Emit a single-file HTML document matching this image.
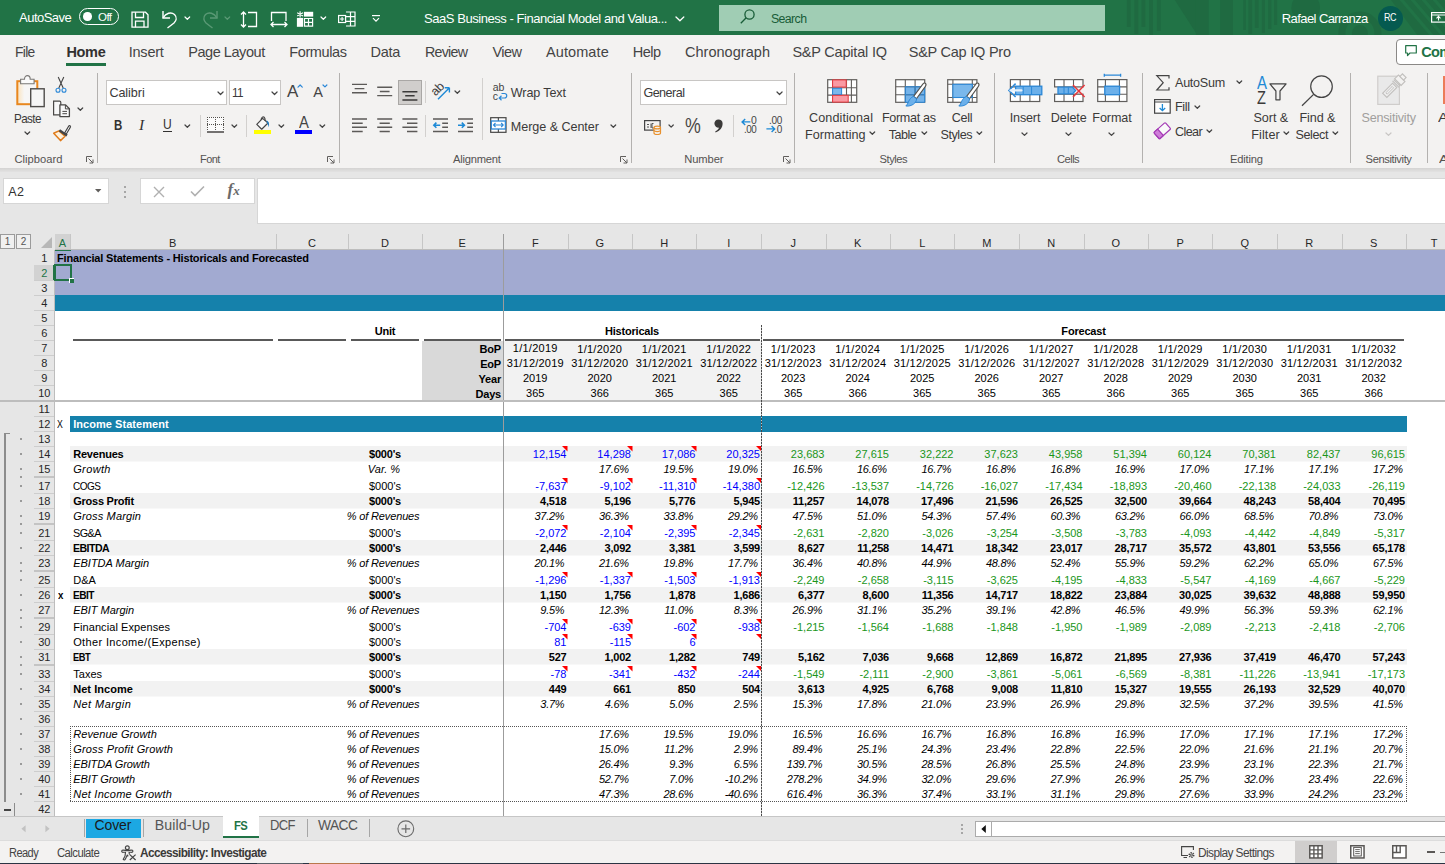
<!DOCTYPE html><html><head><meta charset="utf-8"><title>SaaS Business - Financial Model and Valuation</title><style>
*{box-sizing:border-box;margin:0;padding:0}
html,body{width:1445px;height:864px;overflow:hidden;background:#fff}
body{font-family:"Liberation Sans",sans-serif;position:relative;color:#252423}
.a{position:absolute}
.t{position:absolute;white-space:nowrap;line-height:1}
.c{position:absolute;white-space:nowrap;font-size:11px;line-height:15px;height:15px;color:#000}
.r{text-align:right}
.m{text-align:center}
.b{font-weight:bold}
.i{font-style:italic}
.bl{color:#0000ff}
.gr{color:#1a961a}
svg{position:absolute;overflow:visible}
</style></head><body>
<div class="a " style="left:0px;top:0px;width:1445px;height:35px;background:#217346;"></div>
<div class="a " style="left:0px;top:35px;width:1445px;height:1px;background:#7fac93;"></div>
<div class="a" style="left:1105px;top:0;width:340px;height:35px;overflow:hidden"><svg style="left:0;top:0" width="340" height="35" viewBox="0 0 340 35"><rect x="21.8" y="0" width="3.8" height="27" fill="#1f6a41"/><rect x="29.4" y="0" width="3.9" height="34" fill="#1f6a41"/><rect x="36.5" y="0" width="3.8" height="27" fill="#1f6a41"/><rect x="44.2" y="0" width="3.8" height="36" fill="#1f6a41"/><rect x="51.9" y="0" width="3.8" height="31" fill="#1f6a41"/><path d="M69.8 0H91.0V33Z" fill="#1f6a41"/><rect x="90.9" y="0" width="12.8" height="36" fill="#1f6a41"/><rect x="115.2" y="0" width="12.8" height="36" fill="#1f6a41"/><rect x="138.3" y="0" width="2.5" height="30" fill="#1f6a41"/><rect x="143.4" y="0" width="3.8" height="34" fill="#1f6a41"/><rect x="149.8" y="0" width="3.8" height="28" fill="#1f6a41"/><rect x="156.8" y="0" width="3.2" height="33" fill="#1f6a41"/><rect x="163.2" y="0" width="3.2" height="29" fill="#1f6a41"/><rect x="169.0" y="0" width="3.2" height="25" fill="#1f6a41"/><circle cx="200.7" cy="7.4" r="14.3" fill="#1f6a41"/><circle cx="254.9" cy="33.1" r="18" fill="none" stroke="#1f6a41" stroke-width="7"/><circle cx="254.9" cy="33.1" r="8" fill="#1f6a41"/><path d="M286 0H340V36H313Z" fill="#1f6a41"/><path d="M295 -2L329 38" stroke="#217346" stroke-width="3.2"/><path d="M306 -2L340 38" stroke="#217346" stroke-width="3.2"/><path d="M317 -2L351 38" stroke="#217346" stroke-width="3.2"/><path d="M328 -2L362 38" stroke="#217346" stroke-width="3.2"/><path d="M339 -2L373 38" stroke="#217346" stroke-width="3.2"/><path d="M350 -2L384 38" stroke="#217346" stroke-width="3.2"/></svg></div>
<div class="t" style="left:19.00px;top:11px;font-size:13px;color:#fff;letter-spacing:-0.511px;">AutoSave</div>
<div class="a" style="left:79px;top:8px;width:39.5px;height:17px;border:1px solid #fff;border-radius:9px"></div>
<div class="a" style="left:83px;top:12.4px;width:8.5px;height:8.5px;border-radius:50%;background:#fff"></div>
<div class="t" style="left:98.00px;top:12px;font-size:11.5px;color:#fff;letter-spacing:-0.563px;">Off</div>
<svg style="left:131px;top:10.6px;" width="18" height="17" viewBox="0 0 18 17"><path d="M1 1.2H14.5L17 3.8V16.2H1Z" fill="none" stroke="#fff" stroke-width="1.3"/><path d="M4.5 1.2V6.5H12.5V1.2M4.5 16.2V10.2H13V16.2" fill="none" stroke="#fff" stroke-width="1.3"/></svg>
<svg style="left:161px;top:10px;" width="18" height="19" viewBox="0 0 18 19"><path d="M2 1V8H9" fill="none" stroke="#fff" stroke-width="1.4"/><path d="M2 8C5 3 10 1.5 13.5 4.5C16.5 7.5 15 11 13 13L6.5 18" fill="none" stroke="#fff" stroke-width="1.4"/></svg>
<svg style="left:184.85999999999999px;top:17.075px;" width="4.68" height="2.25" viewBox="0 0 4.68 2.25"><path d="M0 0L2.34 2.25L4.68 0" fill="none" stroke="#fff" stroke-width="1.2" stroke-linecap="round" stroke-linejoin="round"/></svg>
<svg style="left:201px;top:10px;" width="18" height="19" viewBox="0 0 18 19"><path d="M16 1V8H9" fill="none" stroke="#5a9975" stroke-width="1.4"/><path d="M16 8C13 3 8 1.5 4.5 4.5C1.5 7.5 3 11 5 13L11.5 18" fill="none" stroke="#5a9975" stroke-width="1.4"/></svg>
<svg style="left:225.16px;top:17.075px;" width="4.68" height="2.25" viewBox="0 0 4.68 2.25"><path d="M0 0L2.34 2.25L4.68 0" fill="none" stroke="#5a9975" stroke-width="1.2" stroke-linecap="round" stroke-linejoin="round"/></svg>
<svg style="left:240px;top:11px;" width="18" height="17" viewBox="0 0 18 17"><path d="M3.5 1V16M1 3.5L3.5 1L6 3.5M1 13.5L3.5 16L6 13.5" fill="none" stroke="#fff" stroke-width="1.3"/><path d="M8 1.5H16.5V15.5H8" fill="none" stroke="#fff" stroke-width="1.3"/></svg>
<svg style="left:270px;top:11px;" width="18" height="17" viewBox="0 0 18 17"><path d="M1.5 10V1.5H16V10" fill="none" stroke="#fff" stroke-width="1.3"/><path d="M1 13.5H17M3.5 11L1 13.5L3.5 16M14.5 11L17 13.5L14.5 16" fill="none" stroke="#fff" stroke-width="1.3"/></svg>
<svg style="left:296px;top:11px;" width="18" height="16" viewBox="0 0 18 16"><rect x="7.9" y="0.8" width="9.3" height="4.8" fill="#fff"/><rect x="0.9" y="6.9" width="6.2" height="8.9" fill="#fff"/><path d="M8.5 7.5H16.6V15.2H8.5ZM8.5 11.3H16.6M12.5 7.5V15.2" fill="none" stroke="#fff" stroke-width="1.2"/><path d="M4.1 0.3V6.5M1.2 1.8L7 5M7 1.8L1.2 5" stroke="#fff" stroke-width="1.1"/></svg>
<svg style="left:321.46000000000004px;top:17.075px;" width="4.68" height="2.25" viewBox="0 0 4.68 2.25"><path d="M0 0L2.34 2.25L4.68 0" fill="none" stroke="#fff" stroke-width="1.2" stroke-linecap="round" stroke-linejoin="round"/></svg>
<svg style="left:338px;top:11px;" width="18" height="16" viewBox="0 0 18 16"><path d="M8 1H17V15H8M8 5.7H17M8 10.3H17M12.5 1V15" fill="none" stroke="#fff" stroke-width="1.2"/><rect x="0.6" y="4.5" width="7" height="7" fill="#217346" stroke="#fff" stroke-width="1.2"/><path d="M2 8H6.2M4.1 6V10" stroke="#fff" stroke-width="1.1"/></svg>
<svg style="left:372px;top:14.5px;" width="8" height="7" viewBox="0 0 8 7"><path d="M0 0.6H8" stroke="#fff" stroke-width="1.2"/><path d="M1 3.2L4 6.2L7 3.2" fill="none" stroke="#fff" stroke-width="1.2"/></svg>
<div class="t" style="left:424.00px;top:12px;font-size:13px;color:#fff;letter-spacing:-0.451px;">SaaS Business - Financial Model and Valua...</div>
<svg style="left:675.6px;top:17.125px;" width="7.800000000000001" height="3.75" viewBox="0 0 7.800000000000001 3.75"><path d="M0 0L3.9000000000000004 3.75L7.800000000000001 0" fill="none" stroke="#fff" stroke-width="1.3" stroke-linecap="round" stroke-linejoin="round"/></svg>
<div class="a " style="left:719px;top:5px;width:386px;height:26px;background:#a0cdb4;"></div>
<svg style="left:740px;top:9px;" width="15" height="15" viewBox="0 0 15 15"><circle cx="9.5" cy="5.5" r="4.6" fill="none" stroke="#185c37" stroke-width="1.3"/><path d="M6.2 8.8L0.8 14.2" stroke="#185c37" stroke-width="1.3"/></svg>
<div class="t" style="left:770.60px;top:13px;font-size:12.5px;color:#185c37;letter-spacing:-0.625px;transform:scaleX(0.9868);transform-origin:0 0;">Search</div>
<div class="t" style="left:1281.80px;top:12px;font-size:13px;color:#fff;letter-spacing:-0.583px;">Rafael Carranza</div>
<div class="a" style="left:1377.5px;top:5.5px;width:25px;height:25px;border-radius:50%;background:#055a50"></div>
<div class="t" style="left:1383.90px;top:13px;font-size:10.3px;color:#fff;letter-spacing:-0.515px;transform:scaleX(0.8703);transform-origin:0 0;">RC</div>
<svg style="left:1431.3px;top:12px;" width="16" height="11" viewBox="0 0 16 11"><rect x="0.6" y="0.6" width="14" height="9.5" fill="none" stroke="#fff" stroke-width="1.2"/><path d="M0.6 3H14.6M7.5 8.5V4.5M5.5 6.3L7.5 4.3L9.5 6.3" fill="none" stroke="#fff" stroke-width="1.1"/></svg>
<div class="a " style="left:0px;top:35px;width:1445px;height:133px;background:#f3f2f1;"></div>
<div class="t" style="left:15.20px;top:45px;font-size:14.5px;color:#444;letter-spacing:-0.725px;transform:scaleX(0.9533);transform-origin:0 0;">File</div>
<div class="t" style="left:66.40px;top:45px;font-size:14.5px;color:#323130;letter-spacing:-0.329px;font-weight:bold;">Home</div>
<div class="a " style="left:66.4px;top:63px;width:39.6px;height:2.8px;background:#217346;"></div>
<div class="t" style="left:128.70px;top:45px;font-size:14.5px;color:#444;letter-spacing:-0.213px;">Insert</div>
<div class="t" style="left:188.20px;top:45px;font-size:14.5px;color:#444;letter-spacing:-0.443px;">Page Layout</div>
<div class="t" style="left:289.30px;top:45px;font-size:14.5px;color:#444;letter-spacing:-0.404px;">Formulas</div>
<div class="t" style="left:370.50px;top:45px;font-size:14.5px;color:#444;letter-spacing:-0.310px;">Data</div>
<div class="t" style="left:424.50px;top:45px;font-size:14.5px;color:#444;letter-spacing:-0.725px;transform:scaleX(0.9791);transform-origin:0 0;">Review</div>
<div class="t" style="left:492.40px;top:45px;font-size:14.5px;color:#444;letter-spacing:-0.523px;">View</div>
<div class="t" style="left:546.00px;top:45px;font-size:14.5px;color:#444;letter-spacing:0.091px;">Automate</div>
<div class="t" style="left:632.80px;top:45px;font-size:14.5px;color:#444;letter-spacing:-0.541px;">Help</div>
<div class="t" style="left:684.90px;top:45px;font-size:14.5px;color:#444;letter-spacing:0.045px;">Chronograph</div>
<div class="t" style="left:792.40px;top:45px;font-size:14.5px;color:#444;letter-spacing:-0.204px;">S&amp;P Capital IQ</div>
<div class="t" style="left:908.70px;top:45px;font-size:14.5px;color:#444;letter-spacing:-0.232px;">S&amp;P Cap IQ Pro</div>
<div class="a" style="left:1396px;top:39px;width:60px;height:25.7px;background:#fff;border:1px solid #8a8886;border-radius:4px"></div>
<svg style="left:1405px;top:45px;" width="12" height="12" viewBox="0 0 12 12"><path d="M0.7 0.7H11.3V8H5L2.5 10.5V8H0.7Z" fill="none" stroke="#217346" stroke-width="1.2" stroke-linejoin="round"/></svg>
<div class="t" style="left:1421.30px;top:45px;font-size:14.5px;color:#217346;letter-spacing:-0.725px;font-weight:bold;">Com</div>
<div class="a " style="left:97px;top:72.5px;width:1px;height:90.5px;background:#b3b1af;"></div>
<div class="a " style="left:338.6px;top:72.5px;width:1px;height:90.5px;background:#b3b1af;"></div>
<div class="a " style="left:631px;top:72.5px;width:1px;height:90.5px;background:#b3b1af;"></div>
<div class="a " style="left:793.6px;top:72.5px;width:1px;height:90.5px;background:#b3b1af;"></div>
<div class="a " style="left:994px;top:72.5px;width:1px;height:90.5px;background:#b3b1af;"></div>
<div class="a " style="left:1141.6px;top:72.5px;width:1px;height:90.5px;background:#b3b1af;"></div>
<div class="a " style="left:1350px;top:72.5px;width:1px;height:90.5px;background:#b3b1af;"></div>
<div class="a " style="left:1426.6px;top:72.5px;width:1px;height:90.5px;background:#b3b1af;"></div>
<svg style="left:15px;top:75px;" width="32" height="34" viewBox="0 0 32 34"><defs><linearGradient id="pg" x1="0" y1="0" x2="1" y2="0"><stop offset="0" stop-color="#fbe3bd"/><stop offset="0.35" stop-color="#f7f6f5"/></linearGradient></defs><rect x="2.3" y="6.2" width="20" height="23" fill="url(#pg)" stroke="#e8871e" stroke-width="2"/><path d="M5.6 8.8V4.2H9.5C9.5 -0.6 15.2 -0.6 15.2 4.2H19.1V8.8Z" fill="#fafafa" stroke="#7a7876" stroke-width="1.1"/><rect x="15.7" y="13.8" width="13.5" height="17.8" fill="#f6f6f6" stroke="#4f4d4b" stroke-width="1.4"/></svg>
<div class="t" style="left:14.00px;top:113px;font-size:12.6px;color:#3b3a39;letter-spacing:-0.630px;transform:scaleX(0.9259);transform-origin:0 0;">Paste</div>
<svg style="left:25.16px;top:132.375px;" width="4.68" height="2.25" viewBox="0 0 4.68 2.25"><path d="M0 0L2.34 2.25L4.68 0" fill="none" stroke="#444" stroke-width="1.25" stroke-linecap="round" stroke-linejoin="round"/></svg>
<svg style="left:55px;top:76px;" width="12" height="18" viewBox="0 0 12 18"><path d="M3.2 1L8.2 12M8.8 1L3.8 12" stroke="#444" stroke-width="1.1" fill="none"/><circle cx="3" cy="14.3" r="2" fill="none" stroke="#2b88d8" stroke-width="1.1"/><circle cx="9" cy="14.3" r="2" fill="none" stroke="#2b88d8" stroke-width="1.1"/></svg>
<svg style="left:52px;top:100px;" width="19" height="18" viewBox="0 0 19 18"><path d="M1.6 1.2H7.6Q8.8 1.2 8.8 2.4V14.8H1.6Z" fill="#f8f8f8" stroke="#4a4846" stroke-width="1.2"/><path d="M7.9 4.9H13.6L17.4 8.7V16.6H7.9Z" fill="#f8f8f8" stroke="#4a4846" stroke-width="1.3" stroke-linejoin="round"/><path d="M13.4 5V8.9H17.2" fill="none" stroke="#4a4846" stroke-width="1"/><path d="M10.4 11.4H15M10.4 13.7H15" stroke="#4a4846" stroke-width="1"/></svg>
<svg style="left:77.66px;top:108.375px;" width="4.68" height="2.25" viewBox="0 0 4.68 2.25"><path d="M0 0L2.34 2.25L4.68 0" fill="none" stroke="#444" stroke-width="1.25" stroke-linecap="round" stroke-linejoin="round"/></svg>
<svg style="left:52px;top:125px;" width="19" height="17" viewBox="0 0 19 17"><path d="M1.7 8.2L8.5 15.6L13 11.3L6.9 5.9Z" fill="#fdf1dd" stroke="#e07b1a" stroke-width="1.5" stroke-linejoin="round"/><path d="M17.5 1.7L13.6 8.3" stroke="#444" stroke-width="3.2" stroke-linecap="round"/><path d="M17.5 1.7L13.8 8" stroke="#f3f2f1" stroke-width="1" stroke-linecap="round"/><path d="M7.4 5.2L15 10.4" stroke="#444" stroke-width="2.4"/></svg>
<div class="t" style="left:14.50px;top:154px;font-size:11.2px;color:#555352;letter-spacing:0.007px;">Clipboard</div>
<svg style="left:85.5px;top:155.5px;" width="8" height="8" viewBox="0 0 8 8"><path d="M0.5 6V0.5H6" fill="none" stroke="#605e5c" stroke-width="1"/><path d="M2.5 2.5L7 7M7 3.5V7H3.5" fill="none" stroke="#605e5c" stroke-width="1"/></svg>
<div class="a" style="left:106px;top:80px;width:121px;height:24.5px;background:#fff;border:1px solid #c8c6c4"></div>
<div class="t" style="left:109.40px;top:87px;font-size:12.6px;color:#3b3a39;letter-spacing:-0.068px;">Calibri</div>
<svg style="left:218.165px;top:91.925px;" width="5.07" height="2.55" viewBox="0 0 5.07 2.55"><path d="M0 0L2.535 2.55L5.07 0" fill="none" stroke="#444" stroke-width="1.2" stroke-linecap="round" stroke-linejoin="round"/></svg>
<div class="a" style="left:229px;top:80px;width:52px;height:24.5px;background:#fff;border:1px solid #c8c6c4"></div>
<div class="t" style="left:232.20px;top:87px;font-size:12.6px;color:#3b3a39;letter-spacing:-0.630px;transform:scaleX(0.9317);transform-origin:0 0;">11</div>
<svg style="left:271.66499999999996px;top:91.925px;" width="5.07" height="2.55" viewBox="0 0 5.07 2.55"><path d="M0 0L2.535 2.55L5.07 0" fill="none" stroke="#444" stroke-width="1.2" stroke-linecap="round" stroke-linejoin="round"/></svg>
<div class="t" style="left:287.00px;top:83px;font-size:17px;color:#444;letter-spacing:0.000px;">A</div>
<svg style="left:297.855px;top:85.35000000000001px;" width="4.29" height="2.0999999999999996" viewBox="0 0 4.29 2.0999999999999996"><path d="M0 2.0999999999999996L2.145 0L4.29 2.0999999999999996" fill="none" stroke="#2b88d8" stroke-width="1.2" stroke-linecap="round" stroke-linejoin="round"/></svg>
<div class="t" style="left:313.30px;top:85px;font-size:14.5px;color:#444;letter-spacing:0.000px;">A</div>
<svg style="left:323.15000000000003px;top:85.42500000000001px;" width="3.9000000000000004" height="1.9500000000000002" viewBox="0 0 3.9000000000000004 1.9500000000000002"><path d="M0 0L1.9500000000000002 1.9500000000000002L3.9000000000000004 0" fill="none" stroke="#2b88d8" stroke-width="1.2" stroke-linecap="round" stroke-linejoin="round"/></svg>
<div class="t" style="left:114.00px;top:118px;font-size:14.5px;color:#323130;letter-spacing:0.000px;transform:scaleX(0.7926);transform-origin:0 0;font-weight:bold;">B</div>
<div class="t" style="left:139px;top:116.5px;font-size:15.5px;font-style:italic;font-family:'Liberation Serif',serif;color:#323130">I</div>
<div class="t" style="left:163.30px;top:117px;font-size:14px;color:#323130;letter-spacing:0.000px;transform:scaleX(0.8605);transform-origin:0 0;">U</div>
<div class="a " style="left:163px;top:131px;width:9.3px;height:1.1px;background:#323130;"></div>
<svg style="left:184.66px;top:124.675px;" width="4.68" height="2.25" viewBox="0 0 4.68 2.25"><path d="M0 0L2.34 2.25L4.68 0" fill="none" stroke="#444" stroke-width="1.25" stroke-linecap="round" stroke-linejoin="round"/></svg>
<div class="a " style="left:199.7px;top:115px;width:1px;height:21.599999999999994px;background:#d2d0ce;"></div>
<svg style="left:207px;top:116px;" width="17" height="17" viewBox="0 0 17 17"><rect x="0" y="1" width="17" height="14" fill="#fbfbfb"/><path d="M0 1.5H17M0 8.5H17M0.5 1V15M8.5 1V15M16.5 1V15" fill="none" stroke="#55534f" stroke-width="1" stroke-dasharray="1 1"/><path d="M0 16H17" stroke="#3b3a39" stroke-width="1.4"/></svg>
<svg style="left:231.66px;top:124.675px;" width="4.68" height="2.25" viewBox="0 0 4.68 2.25"><path d="M0 0L2.34 2.25L4.68 0" fill="none" stroke="#444" stroke-width="1.25" stroke-linecap="round" stroke-linejoin="round"/></svg>
<div class="a " style="left:246px;top:115px;width:1px;height:21.599999999999994px;background:#d2d0ce;"></div>
<svg style="left:254px;top:116px;" width="17" height="14" viewBox="0 0 17 14"><path d="M2.8 8.4L8.6 2.4L14 7L7.7 13.2Z" fill="#f8f8f8" stroke="#444" stroke-width="1.2" stroke-linejoin="round"/><path d="M7.2 4C7 1.5 9 0.3 10.2 1.2C11.2 2 11.2 3.5 11.2 5" fill="none" stroke="#444" stroke-width="1.1"/><path d="M12.3 4.4C14.8 4.8 15.6 8 14.9 11.2C14.3 9.4 13.9 8.3 13.4 7.4Z" fill="#1e7fc9"/></svg>
<div class="a " style="left:254px;top:130px;width:17px;height:4px;background:#ffff00;"></div>
<svg style="left:278.66px;top:124.675px;" width="4.68" height="2.25" viewBox="0 0 4.68 2.25"><path d="M0 0L2.34 2.25L4.68 0" fill="none" stroke="#444" stroke-width="1.25" stroke-linecap="round" stroke-linejoin="round"/></svg>
<div class="t" style="left:298.50px;top:115px;font-size:16px;color:#444;letter-spacing:0.000px;transform:scaleX(0.9276);transform-origin:0 0;">A</div>
<div class="a " style="left:294.8px;top:130px;width:17px;height:4px;background:#0000ff;"></div>
<svg style="left:319.66px;top:124.675px;" width="4.68" height="2.25" viewBox="0 0 4.68 2.25"><path d="M0 0L2.34 2.25L4.68 0" fill="none" stroke="#444" stroke-width="1.25" stroke-linecap="round" stroke-linejoin="round"/></svg>
<div class="t" style="left:199.70px;top:154px;font-size:11.2px;color:#555352;letter-spacing:-0.560px;transform:scaleX(0.9792);transform-origin:0 0;">Font</div>
<svg style="left:327px;top:155.5px;" width="8" height="8" viewBox="0 0 8 8"><path d="M0.5 6V0.5H6" fill="none" stroke="#605e5c" stroke-width="1"/><path d="M2.5 2.5L7 7M7 3.5V7H3.5" fill="none" stroke="#605e5c" stroke-width="1"/></svg>
<svg style="left:0;top:0" width="1" height="1"><path d="M352.00 84.40H367.00M354.65 88.60H364.35M352.00 92.70H367.00" stroke="#5c5a58" stroke-width="1.4" fill="none"/></svg>
<svg style="left:0;top:0" width="1" height="1"><path d="M377.20 87.30H392.20M379.85 91.50H389.55M377.20 95.60H392.20" stroke="#5c5a58" stroke-width="1.4" fill="none"/></svg>
<div class="a" style="left:398px;top:80px;width:24px;height:25px;background:#d0cecc;border:1px solid #a9a7a5"></div>
<svg style="left:0;top:0" width="1" height="1"><path d="M402.40 91.70H417.40M405.20 95.80H414.60M402.40 100.00H417.40" stroke="#3b3a39" stroke-width="1.5" fill="none"/></svg>
<div class="a " style="left:425.3px;top:81.4px;width:1px;height:21.799999999999997px;background:#d2d0ce;"></div>
<svg style="left:432px;top:83px;" width="19" height="17" viewBox="0 0 19 17"><path d="M6 16.2L17.2 5M17.4 4.8H12.8M17.4 4.8V9.4" fill="none" stroke="#1e8ad6" stroke-width="1.4"/></svg>
<div class="t" style="left:431px;top:83px;font-size:12.5px;color:#444;transform:rotate(-45deg);transform-origin:center;letter-spacing:-0.3px">ab</div>
<svg style="left:454.96000000000004px;top:91.375px;" width="4.68" height="2.25" viewBox="0 0 4.68 2.25"><path d="M0 0L2.34 2.25L4.68 0" fill="none" stroke="#444" stroke-width="1.25" stroke-linecap="round" stroke-linejoin="round"/></svg>
<div class="a " style="left:482.4px;top:78.3px;width:1px;height:61.3px;background:#d2d0ce;"></div>
<div class="t" style="left:492.8px;top:82.5px;font-size:10.5px;color:#444;line-height:9px;letter-spacing:-0.2px">ab<br>c</div>
<svg style="left:498px;top:92px;" width="10" height="9" viewBox="0 0 10 9"><path d="M3.5 1.5H6.5C9.5 1.5 9.5 6 6.5 6H1.5M3.5 3.8L1.2 6L3.5 8.2" fill="none" stroke="#2b88d8" stroke-width="1.2"/></svg>
<div class="t" style="left:510.80px;top:87px;font-size:12.6px;color:#3b3a39;letter-spacing:-0.132px;">Wrap Text</div>
<svg style="left:0;top:0" width="1" height="1"><path d="M352.00 118.90H367.00M352.00 123.20H362.70M352.00 127.30H367.00M352.00 131.50H362.70" stroke="#5c5a58" stroke-width="1.5" fill="none"/></svg>
<svg style="left:0;top:0" width="1" height="1"><path d="M377.20 118.90H392.20M379.60 123.20H389.80M377.20 127.30H392.20M379.60 131.50H389.80" stroke="#5c5a58" stroke-width="1.5" fill="none"/></svg>
<svg style="left:0;top:0" width="1" height="1"><path d="M402.40 118.90H417.40M407.00 123.20H417.40M402.40 127.30H417.40M407.00 131.50H417.40" stroke="#5c5a58" stroke-width="1.5" fill="none"/></svg>
<div class="a " style="left:425.3px;top:115px;width:1px;height:22px;background:#d2d0ce;"></div>
<svg style="left:433.2px;top:118px;" width="15" height="14" viewBox="0 0 15 14"><path d="M0 0.9H15M9.2 5.2H15M9.2 9.3H15M0 13.5H15" stroke="#5c5a58" stroke-width="1.5"/><path d="M7.2 7.2H0.9M3.4 4.6L0.8 7.2L3.4 9.8" fill="none" stroke="#1e8ad6" stroke-width="1.6"/></svg>
<svg style="left:458.4px;top:118px;" width="15" height="14" viewBox="0 0 15 14"><path d="M0 0.9H15M9.2 5.2H15M9.2 9.3H15M0 13.5H15" stroke="#5c5a58" stroke-width="1.5"/><path d="M0 7.2H6.3M3.8 4.6L6.4 7.2L3.8 9.8" fill="none" stroke="#1e8ad6" stroke-width="1.6"/></svg>
<svg style="left:490px;top:117px;" width="17" height="16" viewBox="0 0 17 16"><rect x="0.7" y="0.7" width="15.3" height="14.6" fill="#fff" stroke="#444" stroke-width="1.2"/><path d="M8.35 0.7V4M8.35 12V15.3" stroke="#444" stroke-width="1.1"/><rect x="1.3" y="4" width="14.1" height="8" fill="#fff" stroke="#2b88d8" stroke-width="1.3"/><path d="M3.5 8H13.2M5.5 6L3.5 8L5.5 10M11.2 6L13.2 8L11.2 10" fill="none" stroke="#2b88d8" stroke-width="1.1"/></svg>
<div class="t" style="left:510.80px;top:121px;font-size:12.6px;color:#3b3a39;letter-spacing:-0.057px;">Merge &amp; Center</div>
<svg style="left:611.4599999999999px;top:125.175px;" width="4.68" height="2.25" viewBox="0 0 4.68 2.25"><path d="M0 0L2.34 2.25L4.68 0" fill="none" stroke="#444" stroke-width="1.25" stroke-linecap="round" stroke-linejoin="round"/></svg>
<div class="t" style="left:453.00px;top:154px;font-size:11.2px;color:#555352;letter-spacing:-0.226px;">Alignment</div>
<svg style="left:619.5px;top:155.5px;" width="8" height="8" viewBox="0 0 8 8"><path d="M0.5 6V0.5H6" fill="none" stroke="#605e5c" stroke-width="1"/><path d="M2.5 2.5L7 7M7 3.5V7H3.5" fill="none" stroke="#605e5c" stroke-width="1"/></svg>
<div class="a" style="left:640px;top:80px;width:146.5px;height:24.5px;background:#fff;border:1px solid #c8c6c4"></div>
<div class="t" style="left:643.40px;top:87px;font-size:12.6px;color:#3b3a39;letter-spacing:-0.538px;">General</div>
<svg style="left:777.265px;top:91.925px;" width="5.07" height="2.55" viewBox="0 0 5.07 2.55"><path d="M0 0L2.535 2.55L5.07 0" fill="none" stroke="#444" stroke-width="1.2" stroke-linecap="round" stroke-linejoin="round"/></svg>
<svg style="left:643.5px;top:120px;" width="18" height="15" viewBox="0 0 18 15"><rect x="0.6" y="0.6" width="15.5" height="9.5" fill="none" stroke="#444" stroke-width="1.2"/><path d="M3 4.5H5M3 7H5M7 3.5V8M9.5 3.5H8V8H9.5" stroke="#444" stroke-width="0.9" fill="none"/><path d="M10 7.5V13C10 15 16.5 15 16.5 13V7.5" fill="#f3f2f1" stroke="#e8912d" stroke-width="1.2"/><ellipse cx="13.25" cy="7.5" rx="3.25" ry="1.4" fill="#f3f2f1" stroke="#e8912d" stroke-width="1.2"/><path d="M10 10.3C10 12 16.5 12 16.5 10.3" fill="none" stroke="#e8912d" stroke-width="1.1"/></svg>
<svg style="left:668.855px;top:124.75px;" width="4.29" height="2.0999999999999996" viewBox="0 0 4.29 2.0999999999999996"><path d="M0 0L2.145 2.0999999999999996L4.29 0" fill="none" stroke="#444" stroke-width="1.25" stroke-linecap="round" stroke-linejoin="round"/></svg>
<div class="t" style="left:685.20px;top:116px;font-size:21.5px;color:#4a4846;letter-spacing:0.000px;transform:scaleX(0.8265);transform-origin:0 0;">%</div>
<svg style="left:714px;top:119px;" width="9" height="14" viewBox="0 0 9 14"><path d="M8.6 4.6C8.6 9 6 12 1.6 13.4L1.2 12.4C3.6 11.3 4.8 10 5 8.6A4.1 4.1 0 1 1 8.6 4.6Z" fill="#3b3a39"/></svg>
<div class="a " style="left:733.3px;top:114.7px;width:1px;height:22.299999999999997px;background:#d2d0ce;"></div>
<div class="t" style="left:751.20px;top:116px;font-size:10px;color:#444;letter-spacing:0.000px;transform:scaleX(1.0428);transform-origin:0 0;">0</div>
<div class="t" style="left:744.00px;top:125px;font-size:10px;color:#444;letter-spacing:-0.500px;transform:scaleX(0.9844);transform-origin:0 0;">.00</div>
<svg style="left:740.8px;top:118px;" width="10" height="8" viewBox="0 0 10 8"><path d="M9.4 3.9H1.2M4.2 0.9L1.1 3.9L4.2 6.9" fill="none" stroke="#1e8ad6" stroke-width="1.4"/></svg>
<div class="t" style="left:769.00px;top:116px;font-size:10px;color:#444;letter-spacing:-0.251px;">.00</div>
<div class="t" style="left:774.30px;top:125px;font-size:10px;color:#444;letter-spacing:-0.240px;">.0</div>
<svg style="left:766px;top:125.4px;" width="10" height="8" viewBox="0 0 10 8"><path d="M0.4 3.9H8.6M5.6 0.9L8.7 3.9L5.6 6.9" fill="none" stroke="#1e8ad6" stroke-width="1.4"/></svg>
<div class="t" style="left:684.20px;top:154px;font-size:11.2px;color:#555352;letter-spacing:-0.087px;">Number</div>
<svg style="left:782.5px;top:155.5px;" width="8" height="8" viewBox="0 0 8 8"><path d="M0.5 6V0.5H6" fill="none" stroke="#605e5c" stroke-width="1"/><path d="M2.5 2.5L7 7M7 3.5V7H3.5" fill="none" stroke="#605e5c" stroke-width="1"/></svg>
<svg style="left:826.5px;top:78.5px;" width="31" height="24" viewBox="0 0 31 24"><rect x="0.7" y="0.7" width="29" height="22.6" fill="#fff" stroke="#605e5c" stroke-width="1.2"/><path d="M0.7 8.8H29.7M0.7 16.1H29.7M5.6 0.7V23.3M19.5 0.7V23.3M24.4 0.7V23.3" stroke="#605e5c" stroke-width="1.1"/><rect x="5.6" y="0.9" width="13.6" height="7.2" fill="#f99aa3" stroke="#e8383d" stroke-width="1"/><rect x="5.6" y="9.3" width="9" height="6.2" fill="#7ab8ec" stroke="#2b88d8" stroke-width="1"/><rect x="5.6" y="16.3" width="15.6" height="6.8" fill="#f99aa3" stroke="#e8383d" stroke-width="1"/></svg>
<div class="t" style="left:809.00px;top:112px;font-size:12.6px;color:#3b3a39;letter-spacing:0.095px;">Conditional</div>
<div class="t" style="left:805.00px;top:129px;font-size:12.6px;color:#3b3a39;letter-spacing:0.042px;">Formatting</div>
<svg style="left:870.4599999999999px;top:132.375px;" width="4.68" height="2.25" viewBox="0 0 4.68 2.25"><path d="M0 0L2.34 2.25L4.68 0" fill="none" stroke="#444" stroke-width="1.25" stroke-linecap="round" stroke-linejoin="round"/></svg>
<svg style="left:894.5px;top:78.5px;" width="31" height="24" viewBox="0 0 31 24"><rect x="0.7" y="0.7" width="29" height="22.6" fill="#fff" stroke="#605e5c" stroke-width="1.2"/><rect x="10.3" y="7.8" width="19.4" height="15.5" fill="#74b3ea"/><path d="M0.7 7.8H29.7M0.7 15.7H29.7M10.3 0.7V23.3M20.1 0.7V23.3" stroke="#605e5c" stroke-width="1.1"/><path d="M10.3 7.8H29.7M10.3 15.7H29.7M10.3 7.8V23.3M20.1 7.8V23.3M10.3 23.3H29.7M29.7 7.8V23.3" stroke="#2b88d8" stroke-width="1.1"/></svg>
<svg style="left:904.5px;top:82px;" width="22" height="26" viewBox="0 0 22 26"><path d="M20.2 1.2C21.3 2 21.2 3.2 20.4 4.4L11.6 16.6L8.6 14.4L17.8 2.2C18.6 1.1 19.4 0.7 20.2 1.2Z" fill="#fff" stroke="#55534f" stroke-width="1.1"/><path d="M8.4 14.4L11.6 16.8C11.4 21 7 24.6 0.8 24C3.6 22 3.2 16.6 8.4 14.4Z" fill="#6cb0ea" stroke="#2b88d8" stroke-width="1"/></svg>
<div class="t" style="left:882.00px;top:112px;font-size:12.6px;color:#3b3a39;letter-spacing:-0.339px;">Format as</div>
<div class="t" style="left:888.70px;top:129px;font-size:12.6px;color:#3b3a39;letter-spacing:-0.481px;">Table</div>
<svg style="left:922.4599999999999px;top:132.375px;" width="4.68" height="2.25" viewBox="0 0 4.68 2.25"><path d="M0 0L2.34 2.25L4.68 0" fill="none" stroke="#444" stroke-width="1.25" stroke-linecap="round" stroke-linejoin="round"/></svg>
<svg style="left:947px;top:78.5px;" width="31" height="24" viewBox="0 0 31 24"><rect x="0.7" y="0.7" width="29.2" height="22.6" fill="#fff" stroke="#605e5c" stroke-width="1.2"/><path d="M0.7 5.3H29.9M0.7 18.5H29.9M5.9 0.7V23.3M25.3 0.7V23.3" stroke="#605e5c" stroke-width="1.1"/><rect x="5.9" y="5.3" width="19.4" height="13.2" fill="#7ab8ec" stroke="#2b88d8" stroke-width="1.1"/></svg>
<svg style="left:957.5px;top:82px;" width="22" height="26" viewBox="0 0 22 26"><path d="M20.2 1.2C21.3 2 21.2 3.2 20.4 4.4L11.6 16.6L8.6 14.4L17.8 2.2C18.6 1.1 19.4 0.7 20.2 1.2Z" fill="#fff" stroke="#55534f" stroke-width="1.1"/><path d="M8.4 14.4L11.6 16.8C11.4 21 7 24.6 0.8 24C3.6 22 3.2 16.6 8.4 14.4Z" fill="#6cb0ea" stroke="#2b88d8" stroke-width="1"/></svg>
<div class="t" style="left:951.80px;top:112px;font-size:12.6px;color:#3b3a39;letter-spacing:-0.302px;">Cell</div>
<div class="t" style="left:940.50px;top:129px;font-size:12.6px;color:#3b3a39;letter-spacing:-0.442px;">Styles</div>
<svg style="left:976.9599999999999px;top:132.375px;" width="4.68" height="2.25" viewBox="0 0 4.68 2.25"><path d="M0 0L2.34 2.25L4.68 0" fill="none" stroke="#444" stroke-width="1.25" stroke-linecap="round" stroke-linejoin="round"/></svg>
<div class="t" style="left:879.50px;top:154px;font-size:11.2px;color:#555352;letter-spacing:-0.460px;">Styles</div>
<svg style="left:1008px;top:79px;" width="35" height="23" viewBox="0 0 35 23"><rect x="2.4" y="0.6" width="29.3" height="21.9" fill="#fff" stroke="#605e5c" stroke-width="1.2"/><path d="M12.2 0.6V22.5M21.9 0.6V22.5M2.4 7.9H31.7M2.4 15.2H31.7" stroke="#605e5c" stroke-width="1.1"/><rect x="7.6" y="7.2" width="26.2" height="8.5" fill="#6cb0ea" stroke="#2b88d8" stroke-width="1.3"/><path d="M15.2 7.2V15.7M23.6 7.2V15.7" stroke="#2b88d8" stroke-width="1"/><path d="M7.6 4.6L0.9 11.4L7.6 18" fill="none" stroke="#2b88d8" stroke-width="1.5"/><path d="M2.4 11.4H13.5" stroke="#e6f1fb" stroke-width="2.2" stroke-linecap="round"/></svg>
<div class="t" style="left:1009.80px;top:112px;font-size:12.6px;color:#3b3a39;letter-spacing:-0.183px;">Insert</div>
<svg style="left:1022.1039999999999px;top:132.70000000000002px;" width="4.992000000000001" height="2.4000000000000004" viewBox="0 0 4.992000000000001 2.4000000000000004"><path d="M0 0L2.4960000000000004 2.4000000000000004L4.992000000000001 0" fill="none" stroke="#444" stroke-width="1.25" stroke-linecap="round" stroke-linejoin="round"/></svg>
<svg style="left:1054px;top:79px;" width="33" height="23" viewBox="0 0 33 23"><rect x="0.6" y="0.6" width="28.4" height="7.3" fill="#fff" stroke="#605e5c" stroke-width="1.2"/><rect x="0.6" y="15.2" width="28.4" height="7.3" fill="#fff" stroke="#605e5c" stroke-width="1.2"/><path d="M10 0.6V7.9M19.5 0.6V7.9M10 15.2V22.5M19.5 15.2V22.5" stroke="#605e5c" stroke-width="1.1"/><path d="M4 8.2H18.5L21.6 11.5L18.5 14.9H4Z" fill="#6cb0ea" stroke="#2b88d8" stroke-width="1.3"/><path d="M10 8.2V14.9M14.3 8.2V14.9" stroke="#2b88d8" stroke-width="1"/><path d="M19 6L30.6 18M30.6 6L19 18" stroke="#e8383d" stroke-width="1.5"/></svg>
<div class="t" style="left:1050.80px;top:112px;font-size:12.6px;color:#3b3a39;letter-spacing:-0.105px;">Delete</div>
<svg style="left:1065.504px;top:132.70000000000002px;" width="4.992000000000001" height="2.4000000000000004" viewBox="0 0 4.992000000000001 2.4000000000000004"><path d="M0 0L2.4960000000000004 2.4000000000000004L4.992000000000001 0" fill="none" stroke="#444" stroke-width="1.25" stroke-linecap="round" stroke-linejoin="round"/></svg>
<svg style="left:1097px;top:73px;" width="31" height="30" viewBox="0 0 31 30"><path d="M7.3 2.2H23.6M7.3 0.8V3.7M23.6 0.8V3.7" stroke="#2b88d8" stroke-width="1.3"/><rect x="0.7" y="6.6" width="29.2" height="21.9" fill="#fff" stroke="#605e5c" stroke-width="1.2"/><path d="M8.4 6.6V28.5M22.4 6.6V28.5M0.7 13.9H29.9M0.7 21.2H29.9" stroke="#605e5c" stroke-width="1.1"/><rect x="7.8" y="13.2" width="14.8" height="8.5" fill="#6cb0ea" stroke="#2b88d8" stroke-width="1.3"/></svg>
<div class="t" style="left:1092.30px;top:112px;font-size:12.6px;color:#3b3a39;letter-spacing:-0.101px;">Format</div>
<svg style="left:1109.404px;top:132.70000000000002px;" width="4.992000000000001" height="2.4000000000000004" viewBox="0 0 4.992000000000001 2.4000000000000004"><path d="M0 0L2.4960000000000004 2.4000000000000004L4.992000000000001 0" fill="none" stroke="#444" stroke-width="1.25" stroke-linecap="round" stroke-linejoin="round"/></svg>
<div class="t" style="left:1057.00px;top:154px;font-size:11.2px;color:#555352;letter-spacing:-0.549px;">Cells</div>
<svg style="left:1156px;top:74.5px;" width="14" height="16" viewBox="0 0 14 16"><path d="M13 3.5V0.7H0.8L7.2 7.7L0.8 15H13V12.2" fill="none" stroke="#444" stroke-width="1.2"/></svg>
<div class="t" style="left:1175.00px;top:77px;font-size:12.6px;color:#3b3a39;letter-spacing:-0.272px;">AutoSum</div>
<svg style="left:1237.3600000000001px;top:81.375px;" width="4.68" height="2.25" viewBox="0 0 4.68 2.25"><path d="M0 0L2.34 2.25L4.68 0" fill="none" stroke="#444" stroke-width="1.25" stroke-linecap="round" stroke-linejoin="round"/></svg>
<svg style="left:1154px;top:99px;" width="17" height="15" viewBox="0 0 17 15"><rect x="0.6" y="0.6" width="15.6" height="13.6" fill="#fff" stroke="#444" stroke-width="1.2"/><path d="M0.6 3H16.2" stroke="#444" stroke-width="1"/><path d="M8.4 5V11.6M5.6 9L8.4 11.7L11.2 9" fill="none" stroke="#1e8ad6" stroke-width="1.3"/></svg>
<div class="t" style="left:1175.00px;top:101px;font-size:12.6px;color:#3b3a39;letter-spacing:-0.365px;">Fill</div>
<svg style="left:1194.8600000000001px;top:105.875px;" width="4.68" height="2.25" viewBox="0 0 4.68 2.25"><path d="M0 0L2.34 2.25L4.68 0" fill="none" stroke="#444" stroke-width="1.25" stroke-linecap="round" stroke-linejoin="round"/></svg>
<svg style="left:1154px;top:122px;" width="17" height="17" viewBox="0 0 17 17"><g transform="translate(8.3 8.7) rotate(-42)"><rect x="-7.6" y="-4.3" width="15.2" height="8.6" rx="1" fill="#fafafa" stroke="#a43ab5" stroke-width="1.2"/><path d="M-7.6 -3.3V3.3A1 1 0 0 0 -6.6 4.3H-2.4V-4.3H-6.6A1 1 0 0 0 -7.6 -3.3Z" fill="#cf7fd9" stroke="#a43ab5" stroke-width="1.2"/></g></svg>
<div class="t" style="left:1175.00px;top:126px;font-size:12.6px;color:#3b3a39;letter-spacing:-0.630px;">Clear</div>
<svg style="left:1207.46px;top:130.375px;" width="4.68" height="2.25" viewBox="0 0 4.68 2.25"><path d="M0 0L2.34 2.25L4.68 0" fill="none" stroke="#444" stroke-width="1.25" stroke-linecap="round" stroke-linejoin="round"/></svg>
<div class="t" style="left:1257.00px;top:75px;font-size:17.5px;color:#1e8ad6;letter-spacing:0.000px;transform:scaleX(0.8567);transform-origin:0 0;">A</div>
<div class="t" style="left:1257.30px;top:90px;font-size:17.5px;color:#3b3a39;letter-spacing:0.000px;transform:scaleX(0.8326);transform-origin:0 0;">Z</div>
<svg style="left:1269px;top:82.6px;" width="18" height="18" viewBox="0 0 18 18"><path d="M0.9 0.9H17.1L11 8V16.8H6.9V8Z" fill="none" stroke="#444" stroke-width="1.2" stroke-linejoin="round"/></svg>
<div class="t" style="left:1253.50px;top:112px;font-size:12.6px;color:#3b3a39;letter-spacing:-0.063px;">Sort &amp;</div>
<div class="t" style="left:1251.30px;top:129px;font-size:12.6px;color:#3b3a39;letter-spacing:0.080px;">Filter</div>
<svg style="left:1283.66px;top:132.375px;" width="4.68" height="2.25" viewBox="0 0 4.68 2.25"><path d="M0 0L2.34 2.25L4.68 0" fill="none" stroke="#444" stroke-width="1.25" stroke-linecap="round" stroke-linejoin="round"/></svg>
<svg style="left:1301px;top:74px;" width="33" height="33" viewBox="0 0 33 33"><circle cx="20.5" cy="12.6" r="10.8" fill="none" stroke="#444" stroke-width="1.2"/><path d="M12.6 20.4L1 31.8" stroke="#444" stroke-width="1.3"/></svg>
<div class="t" style="left:1299.50px;top:112px;font-size:12.6px;color:#3b3a39;letter-spacing:-0.103px;">Find &amp;</div>
<div class="t" style="left:1295.40px;top:129px;font-size:12.6px;color:#3b3a39;letter-spacing:-0.384px;">Select</div>
<svg style="left:1333.0600000000002px;top:132.375px;" width="4.68" height="2.25" viewBox="0 0 4.68 2.25"><path d="M0 0L2.34 2.25L4.68 0" fill="none" stroke="#444" stroke-width="1.25" stroke-linecap="round" stroke-linejoin="round"/></svg>
<div class="t" style="left:1230.00px;top:154px;font-size:11.2px;color:#555352;letter-spacing:-0.208px;">Editing</div>
<svg style="left:1376.5px;top:74px;" width="30" height="31" viewBox="0 0 30 31"><rect x="0.8" y="2.2" width="21.6" height="28.2" fill="#e9e9e9" stroke="#cfcdcb" stroke-width="1.2"/><g transform="translate(12.7 16.3) rotate(-45)"><rect x="-7" y="-3" width="14" height="6" fill="#efefef" stroke="#c2c0be" stroke-width="1.1"/><rect x="-4.5" y="-1" width="9" height="2" fill="none" stroke="#c2c0be" stroke-width="0.9"/><path d="M8.6 -4.6V4.6M10.4 -4.6V4.6" stroke="#c2c0be" stroke-width="1.1"/><rect x="11.6" y="-4.6" width="5.4" height="9.2" fill="#f3f2f1" stroke="#c2c0be" stroke-width="1.1"/><rect x="17" y="-2.6" width="3.6" height="5.2" fill="#f3f2f1" stroke="#c2c0be" stroke-width="1.1"/></g></svg>
<div class="t" style="left:1361.50px;top:112px;font-size:12.6px;color:#a19f9d;letter-spacing:-0.222px;">Sensitivity</div>
<svg style="left:1385.8039999999999px;top:132.70000000000002px;" width="4.992000000000001" height="2.4000000000000004" viewBox="0 0 4.992000000000001 2.4000000000000004"><path d="M0 0L2.4960000000000004 2.4000000000000004L4.992000000000001 0" fill="none" stroke="#c8c6c4" stroke-width="1.25" stroke-linecap="round" stroke-linejoin="round"/></svg>
<div class="t" style="left:1365.60px;top:154px;font-size:11.2px;color:#555352;letter-spacing:-0.402px;">Sensitivity</div>
<div class="t" style="left:1437.70px;top:112px;font-size:12.6px;color:#3b3a39;letter-spacing:0.000px;transform:scaleX(1.2255);transform-origin:0 0;">A</div>
<div class="t" style="left:1438.70px;top:154px;font-size:11.2px;color:#555352;letter-spacing:0.000px;transform:scaleX(1.2449);transform-origin:0 0;">A</div>
<div class="a " style="left:1443.4px;top:75.5px;width:3px;height:28.7px;background:#ec7c59;"></div>
<div class="a" style="left:0;top:167.5px;width:1445px;height:5px;background:linear-gradient(#d4d3d2,#e6e6e6)"></div>
<div class="a " style="left:0px;top:172px;width:1445px;height:62px;background:#e6e6e6;"></div>
<div class="a" style="left:2.5px;top:178px;width:106px;height:25.6px;background:#fff;border:1px solid #d6d6d6"></div>
<div class="t" style="left:8.30px;top:186px;font-size:12.5px;color:#323130;letter-spacing:0.410px;">A2</div>
<svg style="left:95px;top:189px;" width="7" height="4" viewBox="0 0 7 4"><path d="M0 0H6.4L3.2 3.6Z" fill="#605e5c"/></svg>
<div class="a " style="left:123.5px;top:185.5px;width:2px;height:2px;background:#a6a6a6;"></div>
<div class="a " style="left:123.5px;top:190.5px;width:2px;height:2px;background:#a6a6a6;"></div>
<div class="a " style="left:123.5px;top:195.5px;width:2px;height:2px;background:#a6a6a6;"></div>
<div class="a" style="left:140px;top:178px;width:114.5px;height:25.6px;background:#fff;border:1px solid #d6d6d6"></div>
<svg style="left:152.5px;top:185.5px;" width="12" height="12" viewBox="0 0 12 12"><path d="M1 1L11 11M11 1L1 11" stroke="#b0b0b0" stroke-width="1.4"/></svg>
<svg style="left:190px;top:185px;" width="15" height="12" viewBox="0 0 15 12"><path d="M1 6.5L5 10.5L14 1.5" fill="none" stroke="#b0b0b0" stroke-width="1.6"/></svg>
<div class="t" style="left:227.5px;top:181px;font-size:17px;font-style:italic;font-weight:bold;font-family:'Liberation Serif',serif;color:#6a6a6a">f<span style="font-size:13px">x</span></div>
<div class="a" style="left:257px;top:178px;width:1200px;height:45.6px;background:#fff;border:1px solid #d6d6d6"></div>
<div class="a " style="left:0px;top:225px;width:1445px;height:25px;background:#e6e6e6;"></div>
<div class="a " style="left:0px;top:250px;width:55px;height:566px;background:#e6e6e6;"></div>
<div class="a " style="left:55px;top:250px;width:1390px;height:566px;background:#fff;"></div>
<div class="a " style="left:55px;top:250px;width:1390px;height:45px;background:#a2aad1;"></div>
<div class="a " style="left:55px;top:295px;width:1390px;height:16px;background:#1581ab;"></div>
<div class="a " style="left:421.5px;top:341.2px;width:81.5px;height:59px;background:#d9d9d9;"></div>
<div class="a " style="left:503px;top:341.2px;width:258px;height:59px;background:#f2f2f2;"></div>
<div class="a " style="left:70px;top:416.0px;width:1336.5px;height:16px;background:#1581ab;"></div>
<div class="a " style="left:70px;top:446.0px;width:1336.5px;height:15px;background:#f2f2f2;"></div>
<div class="a " style="left:70px;top:461.0px;width:1336.5px;height:1px;background:#f8f8f8;"></div>
<div class="a " style="left:70px;top:493.0px;width:1336.5px;height:15px;background:#f2f2f2;"></div>
<div class="a " style="left:70px;top:508.0px;width:1336.5px;height:1px;background:#f8f8f8;"></div>
<div class="a " style="left:70px;top:540.0px;width:1336.5px;height:15px;background:#f2f2f2;"></div>
<div class="a " style="left:70px;top:555.0px;width:1336.5px;height:1px;background:#f8f8f8;"></div>
<div class="a " style="left:70px;top:587.0px;width:1336.5px;height:15px;background:#f2f2f2;"></div>
<div class="a " style="left:70px;top:602.0px;width:1336.5px;height:1px;background:#f8f8f8;"></div>
<div class="a " style="left:70px;top:649.0px;width:1336.5px;height:15px;background:#f2f2f2;"></div>
<div class="a " style="left:70px;top:664.0px;width:1336.5px;height:1px;background:#f8f8f8;"></div>
<div class="a " style="left:70px;top:681.0px;width:1336.5px;height:15px;background:#f2f2f2;"></div>
<div class="a " style="left:70px;top:696.0px;width:1336.5px;height:1px;background:#f8f8f8;"></div>
<div class="a " style="left:73px;top:338.6px;width:200px;height:2px;background:#595959;"></div>
<div class="a " style="left:277.5px;top:338.6px;width:68.5px;height:2px;background:#595959;"></div>
<div class="a " style="left:350.5px;top:338.6px;width:68.5px;height:2px;background:#595959;"></div>
<div class="a " style="left:423.5px;top:338.6px;width:77.5px;height:2px;background:#595959;"></div>
<div class="a " style="left:505px;top:338.6px;width:255px;height:2px;background:#595959;"></div>
<div class="a " style="left:763px;top:338.6px;width:641px;height:2px;background:#595959;"></div>
<div class="a " style="left:55px;top:234px;width:16px;height:16.5px;background:#d2d2d2;border-bottom:1.5px solid #217346;"></div>
<div class="t " style="left:55px;top:238px;font-size:11px;color:#217346;width:15px;text-align:center;">A</div>
<div class="t " style="left:70px;top:238px;font-size:11px;color:#262626;width:205.5px;text-align:center;">B</div>
<div class="a " style="left:70px;top:234px;width:1px;height:16px;background:#c6c6c6;"></div>
<div class="t " style="left:275.5px;top:238px;font-size:11px;color:#262626;width:73.0px;text-align:center;">C</div>
<div class="a " style="left:276px;top:234px;width:1px;height:16px;background:#c6c6c6;"></div>
<div class="t " style="left:348.5px;top:238px;font-size:11px;color:#262626;width:73.0px;text-align:center;">D</div>
<div class="a " style="left:348px;top:234px;width:1px;height:16px;background:#c6c6c6;"></div>
<div class="t " style="left:421.5px;top:238px;font-size:11px;color:#262626;width:81.5px;text-align:center;">E</div>
<div class="a " style="left:422px;top:234px;width:1px;height:16px;background:#c6c6c6;"></div>
<div class="t " style="left:503.0px;top:238px;font-size:11px;color:#262626;width:64.5px;text-align:center;">F</div>
<div class="a " style="left:503px;top:234px;width:1px;height:16px;background:#c6c6c6;"></div>
<div class="t " style="left:567.5px;top:238px;font-size:11px;color:#262626;width:64.5px;text-align:center;">G</div>
<div class="a " style="left:568px;top:234px;width:1px;height:16px;background:#c6c6c6;"></div>
<div class="t " style="left:632.0px;top:238px;font-size:11px;color:#262626;width:64.5px;text-align:center;">H</div>
<div class="a " style="left:632px;top:234px;width:1px;height:16px;background:#c6c6c6;"></div>
<div class="t " style="left:696.5px;top:238px;font-size:11px;color:#262626;width:64.5px;text-align:center;">I</div>
<div class="a " style="left:696px;top:234px;width:1px;height:16px;background:#c6c6c6;"></div>
<div class="t " style="left:761.0px;top:238px;font-size:11px;color:#262626;width:64.5px;text-align:center;">J</div>
<div class="a " style="left:761px;top:234px;width:1px;height:16px;background:#c6c6c6;"></div>
<div class="t " style="left:825.5px;top:238px;font-size:11px;color:#262626;width:64.5px;text-align:center;">K</div>
<div class="a " style="left:826px;top:234px;width:1px;height:16px;background:#c6c6c6;"></div>
<div class="t " style="left:890.0px;top:238px;font-size:11px;color:#262626;width:64.5px;text-align:center;">L</div>
<div class="a " style="left:890px;top:234px;width:1px;height:16px;background:#c6c6c6;"></div>
<div class="t " style="left:954.5px;top:238px;font-size:11px;color:#262626;width:64.5px;text-align:center;">M</div>
<div class="a " style="left:954px;top:234px;width:1px;height:16px;background:#c6c6c6;"></div>
<div class="t " style="left:1019.0px;top:238px;font-size:11px;color:#262626;width:64.5px;text-align:center;">N</div>
<div class="a " style="left:1019px;top:234px;width:1px;height:16px;background:#c6c6c6;"></div>
<div class="t " style="left:1083.5px;top:238px;font-size:11px;color:#262626;width:64.5px;text-align:center;">O</div>
<div class="a " style="left:1084px;top:234px;width:1px;height:16px;background:#c6c6c6;"></div>
<div class="t " style="left:1148.0px;top:238px;font-size:11px;color:#262626;width:64.5px;text-align:center;">P</div>
<div class="a " style="left:1148px;top:234px;width:1px;height:16px;background:#c6c6c6;"></div>
<div class="t " style="left:1212.5px;top:238px;font-size:11px;color:#262626;width:64.5px;text-align:center;">Q</div>
<div class="a " style="left:1212px;top:234px;width:1px;height:16px;background:#c6c6c6;"></div>
<div class="t " style="left:1277.0px;top:238px;font-size:11px;color:#262626;width:64.5px;text-align:center;">R</div>
<div class="a " style="left:1277px;top:234px;width:1px;height:16px;background:#c6c6c6;"></div>
<div class="t " style="left:1341.5px;top:238px;font-size:11px;color:#262626;width:64.5px;text-align:center;">S</div>
<div class="a " style="left:1342px;top:234px;width:1px;height:16px;background:#c6c6c6;"></div>
<div class="t " style="left:1406.0px;top:238px;font-size:11px;color:#262626;width:56.0px;text-align:center;">T</div>
<div class="a " style="left:1406px;top:234px;width:1px;height:16px;background:#c6c6c6;"></div>
<div class="a " style="left:55px;top:249px;width:1390px;height:1px;background:#bdbdbd;"></div>
<svg style="left:40px;top:236px" width="13" height="13"><path d="M12 1V12H1Z" fill="#b7b7b7"/></svg>
<div class="a " style="left:0px;top:234px;width:15px;height:15px;background:#f0f0f0;border:1px solid #9b9b9b;"></div>
<div class="t " style="left:0px;top:237px;font-size:10px;color:#555;width:15px;text-align:center;">1</div>
<div class="a " style="left:16px;top:234px;width:15px;height:15px;background:#f0f0f0;border:1px solid #9b9b9b;"></div>
<div class="t " style="left:16px;top:237px;font-size:10px;color:#555;width:15px;text-align:center;">2</div>
<div class="t " style="left:33.5px;top:252.6px;font-size:11px;color:#262626;width:21.5px;text-align:center;">1</div>
<div class="a " style="left:34px;top:264.5px;width:21px;height:1px;background:#cdcdcd;"></div>
<div class="a " style="left:34px;top:265.0px;width:21px;height:15px;background:#d2d2d2;border-right:2px solid #217346;"></div>
<div class="t " style="left:33.5px;top:267.6px;font-size:11px;color:#217346;width:21.5px;text-align:center;">2</div>
<div class="a " style="left:34px;top:279.5px;width:21px;height:1px;background:#cdcdcd;"></div>
<div class="t " style="left:33.5px;top:282.6px;font-size:11px;color:#262626;width:21.5px;text-align:center;">3</div>
<div class="a " style="left:34px;top:294.5px;width:21px;height:1px;background:#cdcdcd;"></div>
<div class="t " style="left:33.5px;top:297.6px;font-size:11px;color:#262626;width:21.5px;text-align:center;">4</div>
<div class="a " style="left:34px;top:309.5px;width:21px;height:1px;background:#cdcdcd;"></div>
<div class="t " style="left:33.5px;top:312.6px;font-size:11px;color:#262626;width:21.5px;text-align:center;">5</div>
<div class="a " style="left:34px;top:324.5px;width:21px;height:1px;background:#cdcdcd;"></div>
<div class="t " style="left:33.5px;top:327.6px;font-size:11px;color:#262626;width:21.5px;text-align:center;">6</div>
<div class="a " style="left:34px;top:339.5px;width:21px;height:1px;background:#cdcdcd;"></div>
<div class="t " style="left:33.5px;top:342.6px;font-size:11px;color:#262626;width:21.5px;text-align:center;">7</div>
<div class="a " style="left:34px;top:354.5px;width:21px;height:1px;background:#cdcdcd;"></div>
<div class="t " style="left:33.5px;top:357.6px;font-size:11px;color:#262626;width:21.5px;text-align:center;">8</div>
<div class="a " style="left:34px;top:369.5px;width:21px;height:1px;background:#cdcdcd;"></div>
<div class="t " style="left:33.5px;top:372.6px;font-size:11px;color:#262626;width:21.5px;text-align:center;">9</div>
<div class="a " style="left:34px;top:384.5px;width:21px;height:1px;background:#cdcdcd;"></div>
<div class="t " style="left:33.5px;top:387.6px;font-size:11px;color:#262626;width:21.5px;text-align:center;">10</div>
<div class="a " style="left:34px;top:399.5px;width:21px;height:1px;background:#cdcdcd;"></div>
<div class="t " style="left:33.5px;top:403.6px;font-size:11px;color:#262626;width:21.5px;text-align:center;">11</div>
<div class="a " style="left:34px;top:415.5px;width:21px;height:1px;background:#cdcdcd;"></div>
<div class="t " style="left:33.5px;top:418.6px;font-size:11px;color:#262626;width:21.5px;text-align:center;">12</div>
<div class="a " style="left:34px;top:430.5px;width:21px;height:1px;background:#cdcdcd;"></div>
<div class="t " style="left:33.5px;top:433.6px;font-size:11px;color:#262626;width:21.5px;text-align:center;">13</div>
<div class="a " style="left:34px;top:445.5px;width:21px;height:1px;background:#cdcdcd;"></div>
<div class="t " style="left:33.5px;top:448.6px;font-size:11px;color:#262626;width:21.5px;text-align:center;">14</div>
<div class="a " style="left:34px;top:460.5px;width:21px;height:1px;background:#cdcdcd;"></div>
<div class="t " style="left:33.5px;top:463.6px;font-size:11px;color:#262626;width:21.5px;text-align:center;">15</div>
<div class="a " style="left:34px;top:475.5px;width:21px;height:1px;background:#cdcdcd;"></div>
<div class="a " style="left:34px;top:475.5px;width:21px;height:2.6px;background:#c4c4c4;"></div>
<div class="t " style="left:33.5px;top:480.6px;font-size:11px;color:#262626;width:21.5px;text-align:center;">17</div>
<div class="a " style="left:34px;top:492.5px;width:21px;height:1px;background:#cdcdcd;"></div>
<div class="t " style="left:33.5px;top:495.6px;font-size:11px;color:#262626;width:21.5px;text-align:center;">18</div>
<div class="a " style="left:34px;top:507.5px;width:21px;height:1px;background:#cdcdcd;"></div>
<div class="t " style="left:33.5px;top:510.6px;font-size:11px;color:#262626;width:21.5px;text-align:center;">19</div>
<div class="a " style="left:34px;top:522.5px;width:21px;height:1px;background:#cdcdcd;"></div>
<div class="a " style="left:34px;top:522.5px;width:21px;height:2.6px;background:#c4c4c4;"></div>
<div class="t " style="left:33.5px;top:527.6px;font-size:11px;color:#262626;width:21.5px;text-align:center;">21</div>
<div class="a " style="left:34px;top:539.5px;width:21px;height:1px;background:#cdcdcd;"></div>
<div class="t " style="left:33.5px;top:542.6px;font-size:11px;color:#262626;width:21.5px;text-align:center;">22</div>
<div class="a " style="left:34px;top:554.5px;width:21px;height:1px;background:#cdcdcd;"></div>
<div class="t " style="left:33.5px;top:557.6px;font-size:11px;color:#262626;width:21.5px;text-align:center;">23</div>
<div class="a " style="left:34px;top:569.5px;width:21px;height:1px;background:#cdcdcd;"></div>
<div class="a " style="left:34px;top:569.5px;width:21px;height:2.6px;background:#c4c4c4;"></div>
<div class="t " style="left:33.5px;top:574.6px;font-size:11px;color:#262626;width:21.5px;text-align:center;">25</div>
<div class="a " style="left:34px;top:586.5px;width:21px;height:1px;background:#cdcdcd;"></div>
<div class="t " style="left:33.5px;top:589.6px;font-size:11px;color:#262626;width:21.5px;text-align:center;">26</div>
<div class="a " style="left:34px;top:601.5px;width:21px;height:1px;background:#cdcdcd;"></div>
<div class="t " style="left:33.5px;top:604.6px;font-size:11px;color:#262626;width:21.5px;text-align:center;">27</div>
<div class="a " style="left:34px;top:616.5px;width:21px;height:1px;background:#cdcdcd;"></div>
<div class="a " style="left:34px;top:616.5px;width:21px;height:2.6px;background:#c4c4c4;"></div>
<div class="t " style="left:33.5px;top:621.6px;font-size:11px;color:#262626;width:21.5px;text-align:center;">29</div>
<div class="a " style="left:34px;top:633.5px;width:21px;height:1px;background:#cdcdcd;"></div>
<div class="t " style="left:33.5px;top:636.6px;font-size:11px;color:#262626;width:21.5px;text-align:center;">30</div>
<div class="a " style="left:34px;top:648.5px;width:21px;height:1px;background:#cdcdcd;"></div>
<div class="t " style="left:33.5px;top:651.6px;font-size:11px;color:#262626;width:21.5px;text-align:center;">31</div>
<div class="a " style="left:34px;top:663.5px;width:21px;height:1px;background:#cdcdcd;"></div>
<div class="a " style="left:34px;top:663.5px;width:21px;height:2.6px;background:#c4c4c4;"></div>
<div class="t " style="left:33.5px;top:668.6px;font-size:11px;color:#262626;width:21.5px;text-align:center;">33</div>
<div class="a " style="left:34px;top:680.5px;width:21px;height:1px;background:#cdcdcd;"></div>
<div class="t " style="left:33.5px;top:683.6px;font-size:11px;color:#262626;width:21.5px;text-align:center;">34</div>
<div class="a " style="left:34px;top:695.5px;width:21px;height:1px;background:#cdcdcd;"></div>
<div class="t " style="left:33.5px;top:698.6px;font-size:11px;color:#262626;width:21.5px;text-align:center;">35</div>
<div class="a " style="left:34px;top:710.5px;width:21px;height:1px;background:#cdcdcd;"></div>
<div class="t " style="left:33.5px;top:713.6px;font-size:11px;color:#262626;width:21.5px;text-align:center;">36</div>
<div class="a " style="left:34px;top:725.5px;width:21px;height:1px;background:#cdcdcd;"></div>
<div class="t " style="left:33.5px;top:728.6px;font-size:11px;color:#262626;width:21.5px;text-align:center;">37</div>
<div class="a " style="left:34px;top:740.5px;width:21px;height:1px;background:#cdcdcd;"></div>
<div class="t " style="left:33.5px;top:743.6px;font-size:11px;color:#262626;width:21.5px;text-align:center;">38</div>
<div class="a " style="left:34px;top:755.5px;width:21px;height:1px;background:#cdcdcd;"></div>
<div class="t " style="left:33.5px;top:758.6px;font-size:11px;color:#262626;width:21.5px;text-align:center;">39</div>
<div class="a " style="left:34px;top:770.5px;width:21px;height:1px;background:#cdcdcd;"></div>
<div class="t " style="left:33.5px;top:773.6px;font-size:11px;color:#262626;width:21.5px;text-align:center;">40</div>
<div class="a " style="left:34px;top:785.5px;width:21px;height:1px;background:#cdcdcd;"></div>
<div class="t " style="left:33.5px;top:788.6px;font-size:11px;color:#262626;width:21.5px;text-align:center;">41</div>
<div class="a " style="left:34px;top:800.5px;width:21px;height:1px;background:#cdcdcd;"></div>
<div class="t " style="left:33.5px;top:803.6px;font-size:11px;color:#262626;width:21.5px;text-align:center;">42</div>
<div class="a " style="left:34px;top:815.5px;width:21px;height:1px;background:#cdcdcd;"></div>
<div class="a " style="left:54px;top:250px;width:1px;height:566px;background:#bdbdbd;"></div>
<div class="a " style="left:4px;top:433px;width:2px;height:369px;background:#8c8c8c;"></div>
<div class="a " style="left:4px;top:433px;width:5.5px;height:1px;background:#8c8c8c;"></div>
<div class="a " style="left:20.3px;top:438.4px;width:1.6px;height:1.6px;background:#9a9a9a;"></div>
<div class="a " style="left:20.3px;top:453.4px;width:1.6px;height:1.6px;background:#9a9a9a;"></div>
<div class="a " style="left:20.3px;top:468.4px;width:1.6px;height:1.6px;background:#9a9a9a;"></div>
<div class="a " style="left:20.3px;top:476.2px;width:1.6px;height:1.6px;background:#9a9a9a;"></div>
<div class="a " style="left:20.3px;top:485.4px;width:1.6px;height:1.6px;background:#9a9a9a;"></div>
<div class="a " style="left:20.3px;top:500.4px;width:1.6px;height:1.6px;background:#9a9a9a;"></div>
<div class="a " style="left:20.3px;top:515.4px;width:1.6px;height:1.6px;background:#9a9a9a;"></div>
<div class="a " style="left:20.3px;top:523.2px;width:1.6px;height:1.6px;background:#9a9a9a;"></div>
<div class="a " style="left:20.3px;top:532.4px;width:1.6px;height:1.6px;background:#9a9a9a;"></div>
<div class="a " style="left:20.3px;top:547.4px;width:1.6px;height:1.6px;background:#9a9a9a;"></div>
<div class="a " style="left:20.3px;top:562.4px;width:1.6px;height:1.6px;background:#9a9a9a;"></div>
<div class="a " style="left:20.3px;top:570.2px;width:1.6px;height:1.6px;background:#9a9a9a;"></div>
<div class="a " style="left:20.3px;top:579.4px;width:1.6px;height:1.6px;background:#9a9a9a;"></div>
<div class="a " style="left:20.3px;top:594.4px;width:1.6px;height:1.6px;background:#9a9a9a;"></div>
<div class="a " style="left:20.3px;top:609.4px;width:1.6px;height:1.6px;background:#9a9a9a;"></div>
<div class="a " style="left:20.3px;top:617.2px;width:1.6px;height:1.6px;background:#9a9a9a;"></div>
<div class="a " style="left:20.3px;top:626.4px;width:1.6px;height:1.6px;background:#9a9a9a;"></div>
<div class="a " style="left:20.3px;top:641.4px;width:1.6px;height:1.6px;background:#9a9a9a;"></div>
<div class="a " style="left:20.3px;top:656.4px;width:1.6px;height:1.6px;background:#9a9a9a;"></div>
<div class="a " style="left:20.3px;top:664.2px;width:1.6px;height:1.6px;background:#9a9a9a;"></div>
<div class="a " style="left:20.3px;top:673.4px;width:1.6px;height:1.6px;background:#9a9a9a;"></div>
<div class="a " style="left:20.3px;top:688.4px;width:1.6px;height:1.6px;background:#9a9a9a;"></div>
<div class="a " style="left:20.3px;top:703.4px;width:1.6px;height:1.6px;background:#9a9a9a;"></div>
<div class="a " style="left:20.3px;top:718.4px;width:1.6px;height:1.6px;background:#9a9a9a;"></div>
<div class="a " style="left:20.3px;top:733.4px;width:1.6px;height:1.6px;background:#9a9a9a;"></div>
<div class="a " style="left:20.3px;top:748.4px;width:1.6px;height:1.6px;background:#9a9a9a;"></div>
<div class="a " style="left:20.3px;top:763.4px;width:1.6px;height:1.6px;background:#9a9a9a;"></div>
<div class="a " style="left:20.3px;top:778.4px;width:1.6px;height:1.6px;background:#9a9a9a;"></div>
<div class="a " style="left:20.3px;top:793.4px;width:1.6px;height:1.6px;background:#9a9a9a;"></div>
<div class="a " style="left:4.2px;top:809.2px;width:6.6px;height:1.8px;background:#444;"></div>
<div class="a " style="left:14.2px;top:803.0px;width:1px;height:12.5px;background:#8c8c8c;"></div>
<div class="t" style="left:57.00px;top:253px;font-size:11px;color:#000;letter-spacing:-0.175px;font-weight:bold;">Financial Statements - Historicals and Forecasted</div>
<div class="a " style="left:54px;top:264px;width:17.5px;height:17px;border:2px solid #217346;"></div>
<div class="a " style="left:68.5px;top:278px;width:4px;height:4px;background:#217346;border-top:1px solid #fff;border-left:1px solid #fff;width:5px;height:5px;"></div>
<div class="c b" style="left:348.5px;top:324.0px;width:73.0px;text-align:center;letter-spacing:-0.2px;">Unit</div>
<div class="c b" style="left:503.0px;top:324.0px;width:258.0px;text-align:center;letter-spacing:-0.2px;">Historicals</div>
<div class="c b" style="left:761.0px;top:324.0px;width:645.0px;text-align:center;letter-spacing:-0.2px;">Forecast</div>
<div class="c b" style="left:421.5px;top:342.0px;width:81.5px;text-align:right;padding-right:2px;letter-spacing:-0.2px;">BoP</div>
<div class="c b" style="left:421.5px;top:357.0px;width:81.5px;text-align:right;padding-right:2px;letter-spacing:-0.2px;">EoP</div>
<div class="c b" style="left:421.5px;top:372.0px;width:81.5px;text-align:right;padding-right:2px;letter-spacing:-0.2px;">Year</div>
<div class="c b" style="left:421.5px;top:387.0px;width:81.5px;text-align:right;padding-right:2px;letter-spacing:-0.2px;">Days</div>
<div class="c " style="left:503.0px;top:341.0px;width:64.5px;text-align:center;letter-spacing:0.25px;">1/1/2019</div>
<div class="c " style="left:503.0px;top:356.0px;width:64.5px;text-align:center;letter-spacing:0.2px;">31/12/2019</div>
<div class="c " style="left:503.0px;top:371.0px;width:64.5px;text-align:center;">2019</div>
<div class="c " style="left:503.0px;top:386.0px;width:64.5px;text-align:center;">365</div>
<div class="c " style="left:567.5px;top:342.0px;width:64.5px;text-align:center;letter-spacing:0.25px;">1/1/2020</div>
<div class="c " style="left:567.5px;top:356.0px;width:64.5px;text-align:center;letter-spacing:0.2px;">31/12/2020</div>
<div class="c " style="left:567.5px;top:371.0px;width:64.5px;text-align:center;">2020</div>
<div class="c " style="left:567.5px;top:386.0px;width:64.5px;text-align:center;">366</div>
<div class="c " style="left:632.0px;top:342.0px;width:64.5px;text-align:center;letter-spacing:0.25px;">1/1/2021</div>
<div class="c " style="left:632.0px;top:356.0px;width:64.5px;text-align:center;letter-spacing:0.2px;">31/12/2021</div>
<div class="c " style="left:632.0px;top:371.0px;width:64.5px;text-align:center;">2021</div>
<div class="c " style="left:632.0px;top:386.0px;width:64.5px;text-align:center;">365</div>
<div class="c " style="left:696.5px;top:342.0px;width:64.5px;text-align:center;letter-spacing:0.25px;">1/1/2022</div>
<div class="c " style="left:696.5px;top:356.0px;width:64.5px;text-align:center;letter-spacing:0.2px;">31/12/2022</div>
<div class="c " style="left:696.5px;top:371.0px;width:64.5px;text-align:center;">2022</div>
<div class="c " style="left:696.5px;top:386.0px;width:64.5px;text-align:center;">365</div>
<div class="c " style="left:761.0px;top:342.0px;width:64.5px;text-align:center;letter-spacing:0.25px;">1/1/2023</div>
<div class="c " style="left:761.0px;top:356.0px;width:64.5px;text-align:center;letter-spacing:0.2px;">31/12/2023</div>
<div class="c " style="left:761.0px;top:371.0px;width:64.5px;text-align:center;">2023</div>
<div class="c " style="left:761.0px;top:386.0px;width:64.5px;text-align:center;">365</div>
<div class="c " style="left:825.5px;top:342.0px;width:64.5px;text-align:center;letter-spacing:0.25px;">1/1/2024</div>
<div class="c " style="left:825.5px;top:356.0px;width:64.5px;text-align:center;letter-spacing:0.2px;">31/12/2024</div>
<div class="c " style="left:825.5px;top:371.0px;width:64.5px;text-align:center;">2024</div>
<div class="c " style="left:825.5px;top:386.0px;width:64.5px;text-align:center;">366</div>
<div class="c " style="left:890.0px;top:342.0px;width:64.5px;text-align:center;letter-spacing:0.25px;">1/1/2025</div>
<div class="c " style="left:890.0px;top:356.0px;width:64.5px;text-align:center;letter-spacing:0.2px;">31/12/2025</div>
<div class="c " style="left:890.0px;top:371.0px;width:64.5px;text-align:center;">2025</div>
<div class="c " style="left:890.0px;top:386.0px;width:64.5px;text-align:center;">365</div>
<div class="c " style="left:954.5px;top:342.0px;width:64.5px;text-align:center;letter-spacing:0.25px;">1/1/2026</div>
<div class="c " style="left:954.5px;top:356.0px;width:64.5px;text-align:center;letter-spacing:0.2px;">31/12/2026</div>
<div class="c " style="left:954.5px;top:371.0px;width:64.5px;text-align:center;">2026</div>
<div class="c " style="left:954.5px;top:386.0px;width:64.5px;text-align:center;">365</div>
<div class="c " style="left:1019.0px;top:342.0px;width:64.5px;text-align:center;letter-spacing:0.25px;">1/1/2027</div>
<div class="c " style="left:1019.0px;top:356.0px;width:64.5px;text-align:center;letter-spacing:0.2px;">31/12/2027</div>
<div class="c " style="left:1019.0px;top:371.0px;width:64.5px;text-align:center;">2027</div>
<div class="c " style="left:1019.0px;top:386.0px;width:64.5px;text-align:center;">365</div>
<div class="c " style="left:1083.5px;top:342.0px;width:64.5px;text-align:center;letter-spacing:0.25px;">1/1/2028</div>
<div class="c " style="left:1083.5px;top:356.0px;width:64.5px;text-align:center;letter-spacing:0.2px;">31/12/2028</div>
<div class="c " style="left:1083.5px;top:371.0px;width:64.5px;text-align:center;">2028</div>
<div class="c " style="left:1083.5px;top:386.0px;width:64.5px;text-align:center;">366</div>
<div class="c " style="left:1148.0px;top:342.0px;width:64.5px;text-align:center;letter-spacing:0.25px;">1/1/2029</div>
<div class="c " style="left:1148.0px;top:356.0px;width:64.5px;text-align:center;letter-spacing:0.2px;">31/12/2029</div>
<div class="c " style="left:1148.0px;top:371.0px;width:64.5px;text-align:center;">2029</div>
<div class="c " style="left:1148.0px;top:386.0px;width:64.5px;text-align:center;">365</div>
<div class="c " style="left:1212.5px;top:342.0px;width:64.5px;text-align:center;letter-spacing:0.25px;">1/1/2030</div>
<div class="c " style="left:1212.5px;top:356.0px;width:64.5px;text-align:center;letter-spacing:0.2px;">31/12/2030</div>
<div class="c " style="left:1212.5px;top:371.0px;width:64.5px;text-align:center;">2030</div>
<div class="c " style="left:1212.5px;top:386.0px;width:64.5px;text-align:center;">365</div>
<div class="c " style="left:1277.0px;top:342.0px;width:64.5px;text-align:center;letter-spacing:0.25px;">1/1/2031</div>
<div class="c " style="left:1277.0px;top:356.0px;width:64.5px;text-align:center;letter-spacing:0.2px;">31/12/2031</div>
<div class="c " style="left:1277.0px;top:371.0px;width:64.5px;text-align:center;">2031</div>
<div class="c " style="left:1277.0px;top:386.0px;width:64.5px;text-align:center;">365</div>
<div class="c " style="left:1341.5px;top:342.0px;width:64.5px;text-align:center;letter-spacing:0.25px;">1/1/2032</div>
<div class="c " style="left:1341.5px;top:356.0px;width:64.5px;text-align:center;letter-spacing:0.2px;">31/12/2032</div>
<div class="c " style="left:1341.5px;top:371.0px;width:64.5px;text-align:center;">2032</div>
<div class="c " style="left:1341.5px;top:386.0px;width:64.5px;text-align:center;">366</div>
<div class="t" style="left:57.40px;top:419px;font-size:11px;color:#000;letter-spacing:0.000px;transform:scaleX(0.7905);transform-origin:0 0;">X</div>
<div class="t" style="left:73.20px;top:419px;font-size:11px;color:#fff;letter-spacing:0.050px;font-weight:bold;">Income Statement</div>
<div class="t" style="left:57.60px;top:590px;font-size:11px;color:#000;letter-spacing:0.000px;transform:scaleX(0.8827);transform-origin:0 0;font-weight:bold;">x</div>
<div class="t" style="left:73.20px;top:449px;font-size:11px;color:#000;letter-spacing:-0.210px;font-weight:bold;">Revenues</div>
<div class="c b" style="left:348.5px;top:447.0px;width:73.0px;text-align:center;letter-spacing:-0.2px;">$000&#x27;s</div>
<div class="c bl" style="left:503.0px;top:447.0px;width:64.5px;text-align:right;padding-right:1px;">12,154</div>
<svg style="left:562.0px;top:446.0px" width="6" height="6"><path d="M0 0H5.5V5.5Z" fill="#ff0000"/></svg>
<div class="c bl" style="left:567.5px;top:447.0px;width:64.5px;text-align:right;padding-right:1px;">14,298</div>
<svg style="left:626.5px;top:446.0px" width="6" height="6"><path d="M0 0H5.5V5.5Z" fill="#ff0000"/></svg>
<div class="c bl" style="left:632.0px;top:447.0px;width:64.5px;text-align:right;padding-right:1px;">17,086</div>
<svg style="left:691.0px;top:446.0px" width="6" height="6"><path d="M0 0H5.5V5.5Z" fill="#ff0000"/></svg>
<div class="c bl" style="left:696.5px;top:447.0px;width:64.5px;text-align:right;padding-right:1px;">20,325</div>
<svg style="left:755.5px;top:446.0px" width="6" height="6"><path d="M0 0H5.5V5.5Z" fill="#ff0000"/></svg>
<div class="c gr" style="left:761.0px;top:447.0px;width:64.5px;text-align:right;padding-right:1px;">23,683</div>
<div class="c gr" style="left:825.5px;top:447.0px;width:64.5px;text-align:right;padding-right:1px;">27,615</div>
<div class="c gr" style="left:890.0px;top:447.0px;width:64.5px;text-align:right;padding-right:1px;">32,222</div>
<div class="c gr" style="left:954.5px;top:447.0px;width:64.5px;text-align:right;padding-right:1px;">37,623</div>
<div class="c gr" style="left:1019.0px;top:447.0px;width:64.5px;text-align:right;padding-right:1px;">43,958</div>
<div class="c gr" style="left:1083.5px;top:447.0px;width:64.5px;text-align:right;padding-right:1px;">51,394</div>
<div class="c gr" style="left:1148.0px;top:447.0px;width:64.5px;text-align:right;padding-right:1px;">60,124</div>
<div class="c gr" style="left:1212.5px;top:447.0px;width:64.5px;text-align:right;padding-right:1px;">70,381</div>
<div class="c gr" style="left:1277.0px;top:447.0px;width:64.5px;text-align:right;padding-right:1px;">82,437</div>
<div class="c gr" style="left:1341.5px;top:447.0px;width:64.5px;text-align:right;padding-right:1px;">96,615</div>
<div class="t" style="left:73.20px;top:464px;font-size:11px;color:#000;letter-spacing:0.369px;font-style:italic;">Growth</div>
<div class="t" style="left:367.80px;top:464px;font-size:11px;color:#000;letter-spacing:0.021px;font-style:italic;">Var. %</div>
<div class="c i" style="left:567.5px;top:462.0px;width:64.5px;text-align:right;padding-right:3.3px;letter-spacing:-0.3px;">17.6%</div>
<div class="c i" style="left:632.0px;top:462.0px;width:64.5px;text-align:right;padding-right:3.3px;letter-spacing:-0.3px;">19.5%</div>
<div class="c i" style="left:696.5px;top:462.0px;width:64.5px;text-align:right;padding-right:3.3px;letter-spacing:-0.3px;">19.0%</div>
<div class="c i" style="left:761.0px;top:462.0px;width:64.5px;text-align:right;padding-right:3.3px;letter-spacing:-0.3px;">16.5%</div>
<div class="c i" style="left:825.5px;top:462.0px;width:64.5px;text-align:right;padding-right:3.3px;letter-spacing:-0.3px;">16.6%</div>
<div class="c i" style="left:890.0px;top:462.0px;width:64.5px;text-align:right;padding-right:3.3px;letter-spacing:-0.3px;">16.7%</div>
<div class="c i" style="left:954.5px;top:462.0px;width:64.5px;text-align:right;padding-right:3.3px;letter-spacing:-0.3px;">16.8%</div>
<div class="c i" style="left:1019.0px;top:462.0px;width:64.5px;text-align:right;padding-right:3.3px;letter-spacing:-0.3px;">16.8%</div>
<div class="c i" style="left:1083.5px;top:462.0px;width:64.5px;text-align:right;padding-right:3.3px;letter-spacing:-0.3px;">16.9%</div>
<div class="c i" style="left:1148.0px;top:462.0px;width:64.5px;text-align:right;padding-right:3.3px;letter-spacing:-0.3px;">17.0%</div>
<div class="c i" style="left:1212.5px;top:462.0px;width:64.5px;text-align:right;padding-right:3.3px;letter-spacing:-0.3px;">17.1%</div>
<div class="c i" style="left:1277.0px;top:462.0px;width:64.5px;text-align:right;padding-right:3.3px;letter-spacing:-0.3px;">17.1%</div>
<div class="c i" style="left:1341.5px;top:462.0px;width:64.5px;text-align:right;padding-right:3.3px;letter-spacing:-0.3px;">17.2%</div>
<div class="t" style="left:73.20px;top:481px;font-size:11px;color:#000;letter-spacing:-0.550px;transform:scaleX(0.9108);transform-origin:0 0;">COGS</div>
<div class="c " style="left:348.5px;top:479.0px;width:73.0px;text-align:center;">$000&#x27;s</div>
<div class="c bl" style="left:503.0px;top:479.0px;width:64.5px;text-align:right;padding-right:1px;">-7,637</div>
<svg style="left:562.0px;top:478.0px" width="6" height="6"><path d="M0 0H5.5V5.5Z" fill="#ff0000"/></svg>
<div class="c bl" style="left:567.5px;top:479.0px;width:64.5px;text-align:right;padding-right:1px;">-9,102</div>
<svg style="left:626.5px;top:478.0px" width="6" height="6"><path d="M0 0H5.5V5.5Z" fill="#ff0000"/></svg>
<div class="c bl" style="left:632.0px;top:479.0px;width:64.5px;text-align:right;padding-right:1px;">-11,310</div>
<svg style="left:691.0px;top:478.0px" width="6" height="6"><path d="M0 0H5.5V5.5Z" fill="#ff0000"/></svg>
<div class="c bl" style="left:696.5px;top:479.0px;width:64.5px;text-align:right;padding-right:1px;">-14,380</div>
<svg style="left:755.5px;top:478.0px" width="6" height="6"><path d="M0 0H5.5V5.5Z" fill="#ff0000"/></svg>
<div class="c gr" style="left:761.0px;top:479.0px;width:64.5px;text-align:right;padding-right:1px;">-12,426</div>
<div class="c gr" style="left:825.5px;top:479.0px;width:64.5px;text-align:right;padding-right:1px;">-13,537</div>
<div class="c gr" style="left:890.0px;top:479.0px;width:64.5px;text-align:right;padding-right:1px;">-14,726</div>
<div class="c gr" style="left:954.5px;top:479.0px;width:64.5px;text-align:right;padding-right:1px;">-16,027</div>
<div class="c gr" style="left:1019.0px;top:479.0px;width:64.5px;text-align:right;padding-right:1px;">-17,434</div>
<div class="c gr" style="left:1083.5px;top:479.0px;width:64.5px;text-align:right;padding-right:1px;">-18,893</div>
<div class="c gr" style="left:1148.0px;top:479.0px;width:64.5px;text-align:right;padding-right:1px;">-20,460</div>
<div class="c gr" style="left:1212.5px;top:479.0px;width:64.5px;text-align:right;padding-right:1px;">-22,138</div>
<div class="c gr" style="left:1277.0px;top:479.0px;width:64.5px;text-align:right;padding-right:1px;">-24,033</div>
<div class="c gr" style="left:1341.5px;top:479.0px;width:64.5px;text-align:right;padding-right:1px;">-26,119</div>
<div class="t" style="left:73.20px;top:496px;font-size:11px;color:#000;letter-spacing:-0.243px;font-weight:bold;">Gross Profit</div>
<div class="c b" style="left:348.5px;top:494.0px;width:73.0px;text-align:center;letter-spacing:-0.2px;">$000&#x27;s</div>
<div class="c b" style="left:503.0px;top:494.0px;width:64.5px;text-align:right;padding-right:1px;letter-spacing:-0.2px;">4,518</div>
<div class="c b" style="left:567.5px;top:494.0px;width:64.5px;text-align:right;padding-right:1px;letter-spacing:-0.2px;">5,196</div>
<div class="c b" style="left:632.0px;top:494.0px;width:64.5px;text-align:right;padding-right:1px;letter-spacing:-0.2px;">5,776</div>
<div class="c b" style="left:696.5px;top:494.0px;width:64.5px;text-align:right;padding-right:1px;letter-spacing:-0.2px;">5,945</div>
<div class="c b" style="left:761.0px;top:494.0px;width:64.5px;text-align:right;padding-right:1px;letter-spacing:-0.2px;">11,257</div>
<div class="c b" style="left:825.5px;top:494.0px;width:64.5px;text-align:right;padding-right:1px;letter-spacing:-0.2px;">14,078</div>
<div class="c b" style="left:890.0px;top:494.0px;width:64.5px;text-align:right;padding-right:1px;letter-spacing:-0.2px;">17,496</div>
<div class="c b" style="left:954.5px;top:494.0px;width:64.5px;text-align:right;padding-right:1px;letter-spacing:-0.2px;">21,596</div>
<div class="c b" style="left:1019.0px;top:494.0px;width:64.5px;text-align:right;padding-right:1px;letter-spacing:-0.2px;">26,525</div>
<div class="c b" style="left:1083.5px;top:494.0px;width:64.5px;text-align:right;padding-right:1px;letter-spacing:-0.2px;">32,500</div>
<div class="c b" style="left:1148.0px;top:494.0px;width:64.5px;text-align:right;padding-right:1px;letter-spacing:-0.2px;">39,664</div>
<div class="c b" style="left:1212.5px;top:494.0px;width:64.5px;text-align:right;padding-right:1px;letter-spacing:-0.2px;">48,243</div>
<div class="c b" style="left:1277.0px;top:494.0px;width:64.5px;text-align:right;padding-right:1px;letter-spacing:-0.2px;">58,404</div>
<div class="c b" style="left:1341.5px;top:494.0px;width:64.5px;text-align:right;padding-right:1px;letter-spacing:-0.2px;">70,495</div>
<div class="t" style="left:73.20px;top:511px;font-size:11px;color:#000;letter-spacing:0.162px;font-style:italic;">Gross Margin</div>
<div class="t" style="left:346.70px;top:511px;font-size:11px;color:#000;letter-spacing:-0.142px;font-style:italic;">% of Revenues</div>
<div class="c i" style="left:503.0px;top:509.0px;width:64.5px;text-align:right;padding-right:3.3px;letter-spacing:-0.3px;">37.2%</div>
<div class="c i" style="left:567.5px;top:509.0px;width:64.5px;text-align:right;padding-right:3.3px;letter-spacing:-0.3px;">36.3%</div>
<div class="c i" style="left:632.0px;top:509.0px;width:64.5px;text-align:right;padding-right:3.3px;letter-spacing:-0.3px;">33.8%</div>
<div class="c i" style="left:696.5px;top:509.0px;width:64.5px;text-align:right;padding-right:3.3px;letter-spacing:-0.3px;">29.2%</div>
<div class="c i" style="left:761.0px;top:509.0px;width:64.5px;text-align:right;padding-right:3.3px;letter-spacing:-0.3px;">47.5%</div>
<div class="c i" style="left:825.5px;top:509.0px;width:64.5px;text-align:right;padding-right:3.3px;letter-spacing:-0.3px;">51.0%</div>
<div class="c i" style="left:890.0px;top:509.0px;width:64.5px;text-align:right;padding-right:3.3px;letter-spacing:-0.3px;">54.3%</div>
<div class="c i" style="left:954.5px;top:509.0px;width:64.5px;text-align:right;padding-right:3.3px;letter-spacing:-0.3px;">57.4%</div>
<div class="c i" style="left:1019.0px;top:509.0px;width:64.5px;text-align:right;padding-right:3.3px;letter-spacing:-0.3px;">60.3%</div>
<div class="c i" style="left:1083.5px;top:509.0px;width:64.5px;text-align:right;padding-right:3.3px;letter-spacing:-0.3px;">63.2%</div>
<div class="c i" style="left:1148.0px;top:509.0px;width:64.5px;text-align:right;padding-right:3.3px;letter-spacing:-0.3px;">66.0%</div>
<div class="c i" style="left:1212.5px;top:509.0px;width:64.5px;text-align:right;padding-right:3.3px;letter-spacing:-0.3px;">68.5%</div>
<div class="c i" style="left:1277.0px;top:509.0px;width:64.5px;text-align:right;padding-right:3.3px;letter-spacing:-0.3px;">70.8%</div>
<div class="c i" style="left:1341.5px;top:509.0px;width:64.5px;text-align:right;padding-right:3.3px;letter-spacing:-0.3px;">73.0%</div>
<div class="t" style="left:73.20px;top:528px;font-size:11px;color:#000;letter-spacing:-0.550px;transform:scaleX(0.9855);transform-origin:0 0;">SG&amp;A</div>
<div class="c " style="left:348.5px;top:526.0px;width:73.0px;text-align:center;">$000&#x27;s</div>
<div class="c bl" style="left:503.0px;top:526.0px;width:64.5px;text-align:right;padding-right:1px;">-2,072</div>
<svg style="left:562.0px;top:525.0px" width="6" height="6"><path d="M0 0H5.5V5.5Z" fill="#ff0000"/></svg>
<div class="c bl" style="left:567.5px;top:526.0px;width:64.5px;text-align:right;padding-right:1px;">-2,104</div>
<svg style="left:626.5px;top:525.0px" width="6" height="6"><path d="M0 0H5.5V5.5Z" fill="#ff0000"/></svg>
<div class="c bl" style="left:632.0px;top:526.0px;width:64.5px;text-align:right;padding-right:1px;">-2,395</div>
<svg style="left:691.0px;top:525.0px" width="6" height="6"><path d="M0 0H5.5V5.5Z" fill="#ff0000"/></svg>
<div class="c bl" style="left:696.5px;top:526.0px;width:64.5px;text-align:right;padding-right:1px;">-2,345</div>
<svg style="left:755.5px;top:525.0px" width="6" height="6"><path d="M0 0H5.5V5.5Z" fill="#ff0000"/></svg>
<div class="c gr" style="left:761.0px;top:526.0px;width:64.5px;text-align:right;padding-right:1px;">-2,631</div>
<div class="c gr" style="left:825.5px;top:526.0px;width:64.5px;text-align:right;padding-right:1px;">-2,820</div>
<div class="c gr" style="left:890.0px;top:526.0px;width:64.5px;text-align:right;padding-right:1px;">-3,026</div>
<div class="c gr" style="left:954.5px;top:526.0px;width:64.5px;text-align:right;padding-right:1px;">-3,254</div>
<div class="c gr" style="left:1019.0px;top:526.0px;width:64.5px;text-align:right;padding-right:1px;">-3,508</div>
<div class="c gr" style="left:1083.5px;top:526.0px;width:64.5px;text-align:right;padding-right:1px;">-3,783</div>
<div class="c gr" style="left:1148.0px;top:526.0px;width:64.5px;text-align:right;padding-right:1px;">-4,093</div>
<div class="c gr" style="left:1212.5px;top:526.0px;width:64.5px;text-align:right;padding-right:1px;">-4,442</div>
<div class="c gr" style="left:1277.0px;top:526.0px;width:64.5px;text-align:right;padding-right:1px;">-4,849</div>
<div class="c gr" style="left:1341.5px;top:526.0px;width:64.5px;text-align:right;padding-right:1px;">-5,317</div>
<div class="t" style="left:73.20px;top:543px;font-size:11px;color:#000;letter-spacing:-0.550px;transform:scaleX(0.9582);transform-origin:0 0;font-weight:bold;">EBITDA</div>
<div class="c b" style="left:348.5px;top:541.0px;width:73.0px;text-align:center;letter-spacing:-0.2px;">$000&#x27;s</div>
<div class="c b" style="left:503.0px;top:541.0px;width:64.5px;text-align:right;padding-right:1px;letter-spacing:-0.2px;">2,446</div>
<div class="c b" style="left:567.5px;top:541.0px;width:64.5px;text-align:right;padding-right:1px;letter-spacing:-0.2px;">3,092</div>
<div class="c b" style="left:632.0px;top:541.0px;width:64.5px;text-align:right;padding-right:1px;letter-spacing:-0.2px;">3,381</div>
<div class="c b" style="left:696.5px;top:541.0px;width:64.5px;text-align:right;padding-right:1px;letter-spacing:-0.2px;">3,599</div>
<div class="c b" style="left:761.0px;top:541.0px;width:64.5px;text-align:right;padding-right:1px;letter-spacing:-0.2px;">8,627</div>
<div class="c b" style="left:825.5px;top:541.0px;width:64.5px;text-align:right;padding-right:1px;letter-spacing:-0.2px;">11,258</div>
<div class="c b" style="left:890.0px;top:541.0px;width:64.5px;text-align:right;padding-right:1px;letter-spacing:-0.2px;">14,471</div>
<div class="c b" style="left:954.5px;top:541.0px;width:64.5px;text-align:right;padding-right:1px;letter-spacing:-0.2px;">18,342</div>
<div class="c b" style="left:1019.0px;top:541.0px;width:64.5px;text-align:right;padding-right:1px;letter-spacing:-0.2px;">23,017</div>
<div class="c b" style="left:1083.5px;top:541.0px;width:64.5px;text-align:right;padding-right:1px;letter-spacing:-0.2px;">28,717</div>
<div class="c b" style="left:1148.0px;top:541.0px;width:64.5px;text-align:right;padding-right:1px;letter-spacing:-0.2px;">35,572</div>
<div class="c b" style="left:1212.5px;top:541.0px;width:64.5px;text-align:right;padding-right:1px;letter-spacing:-0.2px;">43,801</div>
<div class="c b" style="left:1277.0px;top:541.0px;width:64.5px;text-align:right;padding-right:1px;letter-spacing:-0.2px;">53,556</div>
<div class="c b" style="left:1341.5px;top:541.0px;width:64.5px;text-align:right;padding-right:1px;letter-spacing:-0.2px;">65,178</div>
<div class="t" style="left:73.20px;top:558px;font-size:11px;color:#000;letter-spacing:-0.009px;font-style:italic;">EBITDA Margin</div>
<div class="t" style="left:346.70px;top:558px;font-size:11px;color:#000;letter-spacing:-0.142px;font-style:italic;">% of Revenues</div>
<div class="c i" style="left:503.0px;top:556.0px;width:64.5px;text-align:right;padding-right:3.3px;letter-spacing:-0.3px;">20.1%</div>
<div class="c i" style="left:567.5px;top:556.0px;width:64.5px;text-align:right;padding-right:3.3px;letter-spacing:-0.3px;">21.6%</div>
<div class="c i" style="left:632.0px;top:556.0px;width:64.5px;text-align:right;padding-right:3.3px;letter-spacing:-0.3px;">19.8%</div>
<div class="c i" style="left:696.5px;top:556.0px;width:64.5px;text-align:right;padding-right:3.3px;letter-spacing:-0.3px;">17.7%</div>
<div class="c i" style="left:761.0px;top:556.0px;width:64.5px;text-align:right;padding-right:3.3px;letter-spacing:-0.3px;">36.4%</div>
<div class="c i" style="left:825.5px;top:556.0px;width:64.5px;text-align:right;padding-right:3.3px;letter-spacing:-0.3px;">40.8%</div>
<div class="c i" style="left:890.0px;top:556.0px;width:64.5px;text-align:right;padding-right:3.3px;letter-spacing:-0.3px;">44.9%</div>
<div class="c i" style="left:954.5px;top:556.0px;width:64.5px;text-align:right;padding-right:3.3px;letter-spacing:-0.3px;">48.8%</div>
<div class="c i" style="left:1019.0px;top:556.0px;width:64.5px;text-align:right;padding-right:3.3px;letter-spacing:-0.3px;">52.4%</div>
<div class="c i" style="left:1083.5px;top:556.0px;width:64.5px;text-align:right;padding-right:3.3px;letter-spacing:-0.3px;">55.9%</div>
<div class="c i" style="left:1148.0px;top:556.0px;width:64.5px;text-align:right;padding-right:3.3px;letter-spacing:-0.3px;">59.2%</div>
<div class="c i" style="left:1212.5px;top:556.0px;width:64.5px;text-align:right;padding-right:3.3px;letter-spacing:-0.3px;">62.2%</div>
<div class="c i" style="left:1277.0px;top:556.0px;width:64.5px;text-align:right;padding-right:3.3px;letter-spacing:-0.3px;">65.0%</div>
<div class="c i" style="left:1341.5px;top:556.0px;width:64.5px;text-align:right;padding-right:3.3px;letter-spacing:-0.3px;">67.5%</div>
<div class="t" style="left:73.20px;top:575px;font-size:11px;color:#000;letter-spacing:0.041px;">D&amp;A</div>
<div class="c " style="left:348.5px;top:573.0px;width:73.0px;text-align:center;">$000&#x27;s</div>
<div class="c bl" style="left:503.0px;top:573.0px;width:64.5px;text-align:right;padding-right:1px;">-1,296</div>
<svg style="left:562.0px;top:572.0px" width="6" height="6"><path d="M0 0H5.5V5.5Z" fill="#ff0000"/></svg>
<div class="c bl" style="left:567.5px;top:573.0px;width:64.5px;text-align:right;padding-right:1px;">-1,337</div>
<svg style="left:626.5px;top:572.0px" width="6" height="6"><path d="M0 0H5.5V5.5Z" fill="#ff0000"/></svg>
<div class="c bl" style="left:632.0px;top:573.0px;width:64.5px;text-align:right;padding-right:1px;">-1,503</div>
<svg style="left:691.0px;top:572.0px" width="6" height="6"><path d="M0 0H5.5V5.5Z" fill="#ff0000"/></svg>
<div class="c bl" style="left:696.5px;top:573.0px;width:64.5px;text-align:right;padding-right:1px;">-1,913</div>
<svg style="left:755.5px;top:572.0px" width="6" height="6"><path d="M0 0H5.5V5.5Z" fill="#ff0000"/></svg>
<div class="c gr" style="left:761.0px;top:573.0px;width:64.5px;text-align:right;padding-right:1px;">-2,249</div>
<div class="c gr" style="left:825.5px;top:573.0px;width:64.5px;text-align:right;padding-right:1px;">-2,658</div>
<div class="c gr" style="left:890.0px;top:573.0px;width:64.5px;text-align:right;padding-right:1px;">-3,115</div>
<div class="c gr" style="left:954.5px;top:573.0px;width:64.5px;text-align:right;padding-right:1px;">-3,625</div>
<div class="c gr" style="left:1019.0px;top:573.0px;width:64.5px;text-align:right;padding-right:1px;">-4,195</div>
<div class="c gr" style="left:1083.5px;top:573.0px;width:64.5px;text-align:right;padding-right:1px;">-4,833</div>
<div class="c gr" style="left:1148.0px;top:573.0px;width:64.5px;text-align:right;padding-right:1px;">-5,547</div>
<div class="c gr" style="left:1212.5px;top:573.0px;width:64.5px;text-align:right;padding-right:1px;">-4,169</div>
<div class="c gr" style="left:1277.0px;top:573.0px;width:64.5px;text-align:right;padding-right:1px;">-4,667</div>
<div class="c gr" style="left:1341.5px;top:573.0px;width:64.5px;text-align:right;padding-right:1px;">-5,229</div>
<div class="t" style="left:73.20px;top:590px;font-size:11px;color:#000;letter-spacing:-0.550px;transform:scaleX(0.9185);transform-origin:0 0;font-weight:bold;">EBIT</div>
<div class="c b" style="left:348.5px;top:588.0px;width:73.0px;text-align:center;letter-spacing:-0.2px;">$000&#x27;s</div>
<div class="c b" style="left:503.0px;top:588.0px;width:64.5px;text-align:right;padding-right:1px;letter-spacing:-0.2px;">1,150</div>
<div class="c b" style="left:567.5px;top:588.0px;width:64.5px;text-align:right;padding-right:1px;letter-spacing:-0.2px;">1,756</div>
<div class="c b" style="left:632.0px;top:588.0px;width:64.5px;text-align:right;padding-right:1px;letter-spacing:-0.2px;">1,878</div>
<div class="c b" style="left:696.5px;top:588.0px;width:64.5px;text-align:right;padding-right:1px;letter-spacing:-0.2px;">1,686</div>
<div class="c b" style="left:761.0px;top:588.0px;width:64.5px;text-align:right;padding-right:1px;letter-spacing:-0.2px;">6,377</div>
<div class="c b" style="left:825.5px;top:588.0px;width:64.5px;text-align:right;padding-right:1px;letter-spacing:-0.2px;">8,600</div>
<div class="c b" style="left:890.0px;top:588.0px;width:64.5px;text-align:right;padding-right:1px;letter-spacing:-0.2px;">11,356</div>
<div class="c b" style="left:954.5px;top:588.0px;width:64.5px;text-align:right;padding-right:1px;letter-spacing:-0.2px;">14,717</div>
<div class="c b" style="left:1019.0px;top:588.0px;width:64.5px;text-align:right;padding-right:1px;letter-spacing:-0.2px;">18,822</div>
<div class="c b" style="left:1083.5px;top:588.0px;width:64.5px;text-align:right;padding-right:1px;letter-spacing:-0.2px;">23,884</div>
<div class="c b" style="left:1148.0px;top:588.0px;width:64.5px;text-align:right;padding-right:1px;letter-spacing:-0.2px;">30,025</div>
<div class="c b" style="left:1212.5px;top:588.0px;width:64.5px;text-align:right;padding-right:1px;letter-spacing:-0.2px;">39,632</div>
<div class="c b" style="left:1277.0px;top:588.0px;width:64.5px;text-align:right;padding-right:1px;letter-spacing:-0.2px;">48,888</div>
<div class="c b" style="left:1341.5px;top:588.0px;width:64.5px;text-align:right;padding-right:1px;letter-spacing:-0.2px;">59,950</div>
<div class="t" style="left:73.20px;top:605px;font-size:11px;color:#000;letter-spacing:-0.023px;font-style:italic;">EBIT Margin</div>
<div class="t" style="left:346.70px;top:605px;font-size:11px;color:#000;letter-spacing:-0.142px;font-style:italic;">% of Revenues</div>
<div class="c i" style="left:503.0px;top:603.0px;width:64.5px;text-align:right;padding-right:3.3px;letter-spacing:-0.3px;">9.5%</div>
<div class="c i" style="left:567.5px;top:603.0px;width:64.5px;text-align:right;padding-right:3.3px;letter-spacing:-0.3px;">12.3%</div>
<div class="c i" style="left:632.0px;top:603.0px;width:64.5px;text-align:right;padding-right:3.3px;letter-spacing:-0.3px;">11.0%</div>
<div class="c i" style="left:696.5px;top:603.0px;width:64.5px;text-align:right;padding-right:3.3px;letter-spacing:-0.3px;">8.3%</div>
<div class="c i" style="left:761.0px;top:603.0px;width:64.5px;text-align:right;padding-right:3.3px;letter-spacing:-0.3px;">26.9%</div>
<div class="c i" style="left:825.5px;top:603.0px;width:64.5px;text-align:right;padding-right:3.3px;letter-spacing:-0.3px;">31.1%</div>
<div class="c i" style="left:890.0px;top:603.0px;width:64.5px;text-align:right;padding-right:3.3px;letter-spacing:-0.3px;">35.2%</div>
<div class="c i" style="left:954.5px;top:603.0px;width:64.5px;text-align:right;padding-right:3.3px;letter-spacing:-0.3px;">39.1%</div>
<div class="c i" style="left:1019.0px;top:603.0px;width:64.5px;text-align:right;padding-right:3.3px;letter-spacing:-0.3px;">42.8%</div>
<div class="c i" style="left:1083.5px;top:603.0px;width:64.5px;text-align:right;padding-right:3.3px;letter-spacing:-0.3px;">46.5%</div>
<div class="c i" style="left:1148.0px;top:603.0px;width:64.5px;text-align:right;padding-right:3.3px;letter-spacing:-0.3px;">49.9%</div>
<div class="c i" style="left:1212.5px;top:603.0px;width:64.5px;text-align:right;padding-right:3.3px;letter-spacing:-0.3px;">56.3%</div>
<div class="c i" style="left:1277.0px;top:603.0px;width:64.5px;text-align:right;padding-right:3.3px;letter-spacing:-0.3px;">59.3%</div>
<div class="c i" style="left:1341.5px;top:603.0px;width:64.5px;text-align:right;padding-right:3.3px;letter-spacing:-0.3px;">62.1%</div>
<div class="t" style="left:73.20px;top:622px;font-size:11px;color:#000;letter-spacing:0.083px;">Financial Expenses</div>
<div class="c " style="left:348.5px;top:620.0px;width:73.0px;text-align:center;">$000&#x27;s</div>
<div class="c bl" style="left:503.0px;top:620.0px;width:64.5px;text-align:right;padding-right:1px;">-704</div>
<svg style="left:562.0px;top:619.0px" width="6" height="6"><path d="M0 0H5.5V5.5Z" fill="#ff0000"/></svg>
<div class="c bl" style="left:567.5px;top:620.0px;width:64.5px;text-align:right;padding-right:1px;">-639</div>
<svg style="left:626.5px;top:619.0px" width="6" height="6"><path d="M0 0H5.5V5.5Z" fill="#ff0000"/></svg>
<div class="c bl" style="left:632.0px;top:620.0px;width:64.5px;text-align:right;padding-right:1px;">-602</div>
<svg style="left:691.0px;top:619.0px" width="6" height="6"><path d="M0 0H5.5V5.5Z" fill="#ff0000"/></svg>
<div class="c bl" style="left:696.5px;top:620.0px;width:64.5px;text-align:right;padding-right:1px;">-938</div>
<svg style="left:755.5px;top:619.0px" width="6" height="6"><path d="M0 0H5.5V5.5Z" fill="#ff0000"/></svg>
<div class="c gr" style="left:761.0px;top:620.0px;width:64.5px;text-align:right;padding-right:1px;">-1,215</div>
<div class="c gr" style="left:825.5px;top:620.0px;width:64.5px;text-align:right;padding-right:1px;">-1,564</div>
<div class="c gr" style="left:890.0px;top:620.0px;width:64.5px;text-align:right;padding-right:1px;">-1,688</div>
<div class="c gr" style="left:954.5px;top:620.0px;width:64.5px;text-align:right;padding-right:1px;">-1,848</div>
<div class="c gr" style="left:1019.0px;top:620.0px;width:64.5px;text-align:right;padding-right:1px;">-1,950</div>
<div class="c gr" style="left:1083.5px;top:620.0px;width:64.5px;text-align:right;padding-right:1px;">-1,989</div>
<div class="c gr" style="left:1148.0px;top:620.0px;width:64.5px;text-align:right;padding-right:1px;">-2,089</div>
<div class="c gr" style="left:1212.5px;top:620.0px;width:64.5px;text-align:right;padding-right:1px;">-2,213</div>
<div class="c gr" style="left:1277.0px;top:620.0px;width:64.5px;text-align:right;padding-right:1px;">-2,418</div>
<div class="c gr" style="left:1341.5px;top:620.0px;width:64.5px;text-align:right;padding-right:1px;">-2,706</div>
<div class="t" style="left:73.20px;top:637px;font-size:11px;color:#000;letter-spacing:0.356px;">Other Income/(Expense)</div>
<div class="c " style="left:348.5px;top:635.0px;width:73.0px;text-align:center;">$000&#x27;s</div>
<div class="c bl" style="left:503.0px;top:635.0px;width:64.5px;text-align:right;padding-right:1px;">81</div>
<svg style="left:562.0px;top:634.0px" width="6" height="6"><path d="M0 0H5.5V5.5Z" fill="#ff0000"/></svg>
<div class="c bl" style="left:567.5px;top:635.0px;width:64.5px;text-align:right;padding-right:1px;">-115</div>
<svg style="left:626.5px;top:634.0px" width="6" height="6"><path d="M0 0H5.5V5.5Z" fill="#ff0000"/></svg>
<div class="c bl" style="left:632.0px;top:635.0px;width:64.5px;text-align:right;padding-right:1px;">6</div>
<svg style="left:691.0px;top:634.0px" width="6" height="6"><path d="M0 0H5.5V5.5Z" fill="#ff0000"/></svg>
<svg style="left:755.5px;top:634.0px" width="6" height="6"><path d="M0 0H5.5V5.5Z" fill="#ff0000"/></svg>
<div class="t" style="left:73.20px;top:652px;font-size:11px;color:#000;letter-spacing:-0.550px;transform:scaleX(0.8421);transform-origin:0 0;font-weight:bold;">EBT</div>
<div class="c b" style="left:348.5px;top:650.0px;width:73.0px;text-align:center;letter-spacing:-0.2px;">$000&#x27;s</div>
<div class="c b" style="left:503.0px;top:650.0px;width:64.5px;text-align:right;padding-right:1px;letter-spacing:-0.2px;">527</div>
<div class="c b" style="left:567.5px;top:650.0px;width:64.5px;text-align:right;padding-right:1px;letter-spacing:-0.2px;">1,002</div>
<div class="c b" style="left:632.0px;top:650.0px;width:64.5px;text-align:right;padding-right:1px;letter-spacing:-0.2px;">1,282</div>
<div class="c b" style="left:696.5px;top:650.0px;width:64.5px;text-align:right;padding-right:1px;letter-spacing:-0.2px;">749</div>
<div class="c b" style="left:761.0px;top:650.0px;width:64.5px;text-align:right;padding-right:1px;letter-spacing:-0.2px;">5,162</div>
<div class="c b" style="left:825.5px;top:650.0px;width:64.5px;text-align:right;padding-right:1px;letter-spacing:-0.2px;">7,036</div>
<div class="c b" style="left:890.0px;top:650.0px;width:64.5px;text-align:right;padding-right:1px;letter-spacing:-0.2px;">9,668</div>
<div class="c b" style="left:954.5px;top:650.0px;width:64.5px;text-align:right;padding-right:1px;letter-spacing:-0.2px;">12,869</div>
<div class="c b" style="left:1019.0px;top:650.0px;width:64.5px;text-align:right;padding-right:1px;letter-spacing:-0.2px;">16,872</div>
<div class="c b" style="left:1083.5px;top:650.0px;width:64.5px;text-align:right;padding-right:1px;letter-spacing:-0.2px;">21,895</div>
<div class="c b" style="left:1148.0px;top:650.0px;width:64.5px;text-align:right;padding-right:1px;letter-spacing:-0.2px;">27,936</div>
<div class="c b" style="left:1212.5px;top:650.0px;width:64.5px;text-align:right;padding-right:1px;letter-spacing:-0.2px;">37,419</div>
<div class="c b" style="left:1277.0px;top:650.0px;width:64.5px;text-align:right;padding-right:1px;letter-spacing:-0.2px;">46,470</div>
<div class="c b" style="left:1341.5px;top:650.0px;width:64.5px;text-align:right;padding-right:1px;letter-spacing:-0.2px;">57,243</div>
<div class="t" style="left:73.20px;top:669px;font-size:11px;color:#000;letter-spacing:0.041px;">Taxes</div>
<div class="c " style="left:348.5px;top:667.0px;width:73.0px;text-align:center;">$000&#x27;s</div>
<div class="c bl" style="left:503.0px;top:667.0px;width:64.5px;text-align:right;padding-right:1px;">-78</div>
<svg style="left:562.0px;top:666.0px" width="6" height="6"><path d="M0 0H5.5V5.5Z" fill="#ff0000"/></svg>
<div class="c bl" style="left:567.5px;top:667.0px;width:64.5px;text-align:right;padding-right:1px;">-341</div>
<svg style="left:626.5px;top:666.0px" width="6" height="6"><path d="M0 0H5.5V5.5Z" fill="#ff0000"/></svg>
<div class="c bl" style="left:632.0px;top:667.0px;width:64.5px;text-align:right;padding-right:1px;">-432</div>
<svg style="left:691.0px;top:666.0px" width="6" height="6"><path d="M0 0H5.5V5.5Z" fill="#ff0000"/></svg>
<div class="c bl" style="left:696.5px;top:667.0px;width:64.5px;text-align:right;padding-right:1px;">-244</div>
<svg style="left:755.5px;top:666.0px" width="6" height="6"><path d="M0 0H5.5V5.5Z" fill="#ff0000"/></svg>
<div class="c gr" style="left:761.0px;top:667.0px;width:64.5px;text-align:right;padding-right:1px;">-1,549</div>
<div class="c gr" style="left:825.5px;top:667.0px;width:64.5px;text-align:right;padding-right:1px;">-2,111</div>
<div class="c gr" style="left:890.0px;top:667.0px;width:64.5px;text-align:right;padding-right:1px;">-2,900</div>
<div class="c gr" style="left:954.5px;top:667.0px;width:64.5px;text-align:right;padding-right:1px;">-3,861</div>
<div class="c gr" style="left:1019.0px;top:667.0px;width:64.5px;text-align:right;padding-right:1px;">-5,061</div>
<div class="c gr" style="left:1083.5px;top:667.0px;width:64.5px;text-align:right;padding-right:1px;">-6,569</div>
<div class="c gr" style="left:1148.0px;top:667.0px;width:64.5px;text-align:right;padding-right:1px;">-8,381</div>
<div class="c gr" style="left:1212.5px;top:667.0px;width:64.5px;text-align:right;padding-right:1px;">-11,226</div>
<div class="c gr" style="left:1277.0px;top:667.0px;width:64.5px;text-align:right;padding-right:1px;">-13,941</div>
<div class="c gr" style="left:1341.5px;top:667.0px;width:64.5px;text-align:right;padding-right:1px;">-17,173</div>
<div class="t" style="left:73.20px;top:684px;font-size:11px;color:#000;letter-spacing:0.045px;font-weight:bold;">Net Income</div>
<div class="c b" style="left:348.5px;top:682.0px;width:73.0px;text-align:center;letter-spacing:-0.2px;">$000&#x27;s</div>
<div class="c b" style="left:503.0px;top:682.0px;width:64.5px;text-align:right;padding-right:1px;letter-spacing:-0.2px;">449</div>
<div class="c b" style="left:567.5px;top:682.0px;width:64.5px;text-align:right;padding-right:1px;letter-spacing:-0.2px;">661</div>
<div class="c b" style="left:632.0px;top:682.0px;width:64.5px;text-align:right;padding-right:1px;letter-spacing:-0.2px;">850</div>
<div class="c b" style="left:696.5px;top:682.0px;width:64.5px;text-align:right;padding-right:1px;letter-spacing:-0.2px;">504</div>
<div class="c b" style="left:761.0px;top:682.0px;width:64.5px;text-align:right;padding-right:1px;letter-spacing:-0.2px;">3,613</div>
<div class="c b" style="left:825.5px;top:682.0px;width:64.5px;text-align:right;padding-right:1px;letter-spacing:-0.2px;">4,925</div>
<div class="c b" style="left:890.0px;top:682.0px;width:64.5px;text-align:right;padding-right:1px;letter-spacing:-0.2px;">6,768</div>
<div class="c b" style="left:954.5px;top:682.0px;width:64.5px;text-align:right;padding-right:1px;letter-spacing:-0.2px;">9,008</div>
<div class="c b" style="left:1019.0px;top:682.0px;width:64.5px;text-align:right;padding-right:1px;letter-spacing:-0.2px;">11,810</div>
<div class="c b" style="left:1083.5px;top:682.0px;width:64.5px;text-align:right;padding-right:1px;letter-spacing:-0.2px;">15,327</div>
<div class="c b" style="left:1148.0px;top:682.0px;width:64.5px;text-align:right;padding-right:1px;letter-spacing:-0.2px;">19,555</div>
<div class="c b" style="left:1212.5px;top:682.0px;width:64.5px;text-align:right;padding-right:1px;letter-spacing:-0.2px;">26,193</div>
<div class="c b" style="left:1277.0px;top:682.0px;width:64.5px;text-align:right;padding-right:1px;letter-spacing:-0.2px;">32,529</div>
<div class="c b" style="left:1341.5px;top:682.0px;width:64.5px;text-align:right;padding-right:1px;letter-spacing:-0.2px;">40,070</div>
<div class="t" style="left:73.20px;top:699px;font-size:11px;color:#000;letter-spacing:0.422px;font-style:italic;">Net Margin</div>
<div class="t" style="left:346.70px;top:699px;font-size:11px;color:#000;letter-spacing:-0.142px;font-style:italic;">% of Revenues</div>
<div class="c i" style="left:503.0px;top:697.0px;width:64.5px;text-align:right;padding-right:3.3px;letter-spacing:-0.3px;">3.7%</div>
<div class="c i" style="left:567.5px;top:697.0px;width:64.5px;text-align:right;padding-right:3.3px;letter-spacing:-0.3px;">4.6%</div>
<div class="c i" style="left:632.0px;top:697.0px;width:64.5px;text-align:right;padding-right:3.3px;letter-spacing:-0.3px;">5.0%</div>
<div class="c i" style="left:696.5px;top:697.0px;width:64.5px;text-align:right;padding-right:3.3px;letter-spacing:-0.3px;">2.5%</div>
<div class="c i" style="left:761.0px;top:697.0px;width:64.5px;text-align:right;padding-right:3.3px;letter-spacing:-0.3px;">15.3%</div>
<div class="c i" style="left:825.5px;top:697.0px;width:64.5px;text-align:right;padding-right:3.3px;letter-spacing:-0.3px;">17.8%</div>
<div class="c i" style="left:890.0px;top:697.0px;width:64.5px;text-align:right;padding-right:3.3px;letter-spacing:-0.3px;">21.0%</div>
<div class="c i" style="left:954.5px;top:697.0px;width:64.5px;text-align:right;padding-right:3.3px;letter-spacing:-0.3px;">23.9%</div>
<div class="c i" style="left:1019.0px;top:697.0px;width:64.5px;text-align:right;padding-right:3.3px;letter-spacing:-0.3px;">26.9%</div>
<div class="c i" style="left:1083.5px;top:697.0px;width:64.5px;text-align:right;padding-right:3.3px;letter-spacing:-0.3px;">29.8%</div>
<div class="c i" style="left:1148.0px;top:697.0px;width:64.5px;text-align:right;padding-right:3.3px;letter-spacing:-0.3px;">32.5%</div>
<div class="c i" style="left:1212.5px;top:697.0px;width:64.5px;text-align:right;padding-right:3.3px;letter-spacing:-0.3px;">37.2%</div>
<div class="c i" style="left:1277.0px;top:697.0px;width:64.5px;text-align:right;padding-right:3.3px;letter-spacing:-0.3px;">39.5%</div>
<div class="c i" style="left:1341.5px;top:697.0px;width:64.5px;text-align:right;padding-right:3.3px;letter-spacing:-0.3px;">41.5%</div>
<div class="t" style="left:73.20px;top:729px;font-size:11px;color:#000;letter-spacing:0.081px;font-style:italic;">Revenue Growth</div>
<div class="t" style="left:346.70px;top:729px;font-size:11px;color:#000;letter-spacing:-0.142px;font-style:italic;">% of Revenues</div>
<div class="c i" style="left:567.5px;top:727.0px;width:64.5px;text-align:right;padding-right:3.3px;letter-spacing:-0.3px;">17.6%</div>
<div class="c i" style="left:632.0px;top:727.0px;width:64.5px;text-align:right;padding-right:3.3px;letter-spacing:-0.3px;">19.5%</div>
<div class="c i" style="left:696.5px;top:727.0px;width:64.5px;text-align:right;padding-right:3.3px;letter-spacing:-0.3px;">19.0%</div>
<div class="c i" style="left:761.0px;top:727.0px;width:64.5px;text-align:right;padding-right:3.3px;letter-spacing:-0.3px;">16.5%</div>
<div class="c i" style="left:825.5px;top:727.0px;width:64.5px;text-align:right;padding-right:3.3px;letter-spacing:-0.3px;">16.6%</div>
<div class="c i" style="left:890.0px;top:727.0px;width:64.5px;text-align:right;padding-right:3.3px;letter-spacing:-0.3px;">16.7%</div>
<div class="c i" style="left:954.5px;top:727.0px;width:64.5px;text-align:right;padding-right:3.3px;letter-spacing:-0.3px;">16.8%</div>
<div class="c i" style="left:1019.0px;top:727.0px;width:64.5px;text-align:right;padding-right:3.3px;letter-spacing:-0.3px;">16.8%</div>
<div class="c i" style="left:1083.5px;top:727.0px;width:64.5px;text-align:right;padding-right:3.3px;letter-spacing:-0.3px;">16.9%</div>
<div class="c i" style="left:1148.0px;top:727.0px;width:64.5px;text-align:right;padding-right:3.3px;letter-spacing:-0.3px;">17.0%</div>
<div class="c i" style="left:1212.5px;top:727.0px;width:64.5px;text-align:right;padding-right:3.3px;letter-spacing:-0.3px;">17.1%</div>
<div class="c i" style="left:1277.0px;top:727.0px;width:64.5px;text-align:right;padding-right:3.3px;letter-spacing:-0.3px;">17.1%</div>
<div class="c i" style="left:1341.5px;top:727.0px;width:64.5px;text-align:right;padding-right:3.3px;letter-spacing:-0.3px;">17.2%</div>
<div class="t" style="left:73.20px;top:744px;font-size:11px;color:#000;letter-spacing:0.179px;font-style:italic;">Gross Profit Growth</div>
<div class="t" style="left:346.70px;top:744px;font-size:11px;color:#000;letter-spacing:-0.142px;font-style:italic;">% of Revenues</div>
<div class="c i" style="left:567.5px;top:742.0px;width:64.5px;text-align:right;padding-right:3.3px;letter-spacing:-0.3px;">15.0%</div>
<div class="c i" style="left:632.0px;top:742.0px;width:64.5px;text-align:right;padding-right:3.3px;letter-spacing:-0.3px;">11.2%</div>
<div class="c i" style="left:696.5px;top:742.0px;width:64.5px;text-align:right;padding-right:3.3px;letter-spacing:-0.3px;">2.9%</div>
<div class="c i" style="left:761.0px;top:742.0px;width:64.5px;text-align:right;padding-right:3.3px;letter-spacing:-0.3px;">89.4%</div>
<div class="c i" style="left:825.5px;top:742.0px;width:64.5px;text-align:right;padding-right:3.3px;letter-spacing:-0.3px;">25.1%</div>
<div class="c i" style="left:890.0px;top:742.0px;width:64.5px;text-align:right;padding-right:3.3px;letter-spacing:-0.3px;">24.3%</div>
<div class="c i" style="left:954.5px;top:742.0px;width:64.5px;text-align:right;padding-right:3.3px;letter-spacing:-0.3px;">23.4%</div>
<div class="c i" style="left:1019.0px;top:742.0px;width:64.5px;text-align:right;padding-right:3.3px;letter-spacing:-0.3px;">22.8%</div>
<div class="c i" style="left:1083.5px;top:742.0px;width:64.5px;text-align:right;padding-right:3.3px;letter-spacing:-0.3px;">22.5%</div>
<div class="c i" style="left:1148.0px;top:742.0px;width:64.5px;text-align:right;padding-right:3.3px;letter-spacing:-0.3px;">22.0%</div>
<div class="c i" style="left:1212.5px;top:742.0px;width:64.5px;text-align:right;padding-right:3.3px;letter-spacing:-0.3px;">21.6%</div>
<div class="c i" style="left:1277.0px;top:742.0px;width:64.5px;text-align:right;padding-right:3.3px;letter-spacing:-0.3px;">21.1%</div>
<div class="c i" style="left:1341.5px;top:742.0px;width:64.5px;text-align:right;padding-right:3.3px;letter-spacing:-0.3px;">20.7%</div>
<div class="t" style="left:73.20px;top:759px;font-size:11px;color:#000;letter-spacing:-0.103px;font-style:italic;">EBITDA Growth</div>
<div class="t" style="left:346.70px;top:759px;font-size:11px;color:#000;letter-spacing:-0.142px;font-style:italic;">% of Revenues</div>
<div class="c i" style="left:567.5px;top:757.0px;width:64.5px;text-align:right;padding-right:3.3px;letter-spacing:-0.3px;">26.4%</div>
<div class="c i" style="left:632.0px;top:757.0px;width:64.5px;text-align:right;padding-right:3.3px;letter-spacing:-0.3px;">9.3%</div>
<div class="c i" style="left:696.5px;top:757.0px;width:64.5px;text-align:right;padding-right:3.3px;letter-spacing:-0.3px;">6.5%</div>
<div class="c i" style="left:761.0px;top:757.0px;width:64.5px;text-align:right;padding-right:3.3px;letter-spacing:-0.3px;">139.7%</div>
<div class="c i" style="left:825.5px;top:757.0px;width:64.5px;text-align:right;padding-right:3.3px;letter-spacing:-0.3px;">30.5%</div>
<div class="c i" style="left:890.0px;top:757.0px;width:64.5px;text-align:right;padding-right:3.3px;letter-spacing:-0.3px;">28.5%</div>
<div class="c i" style="left:954.5px;top:757.0px;width:64.5px;text-align:right;padding-right:3.3px;letter-spacing:-0.3px;">26.8%</div>
<div class="c i" style="left:1019.0px;top:757.0px;width:64.5px;text-align:right;padding-right:3.3px;letter-spacing:-0.3px;">25.5%</div>
<div class="c i" style="left:1083.5px;top:757.0px;width:64.5px;text-align:right;padding-right:3.3px;letter-spacing:-0.3px;">24.8%</div>
<div class="c i" style="left:1148.0px;top:757.0px;width:64.5px;text-align:right;padding-right:3.3px;letter-spacing:-0.3px;">23.9%</div>
<div class="c i" style="left:1212.5px;top:757.0px;width:64.5px;text-align:right;padding-right:3.3px;letter-spacing:-0.3px;">23.1%</div>
<div class="c i" style="left:1277.0px;top:757.0px;width:64.5px;text-align:right;padding-right:3.3px;letter-spacing:-0.3px;">22.3%</div>
<div class="c i" style="left:1341.5px;top:757.0px;width:64.5px;text-align:right;padding-right:3.3px;letter-spacing:-0.3px;">21.7%</div>
<div class="t" style="left:73.20px;top:774px;font-size:11px;color:#000;letter-spacing:-0.096px;font-style:italic;">EBIT Growth</div>
<div class="t" style="left:346.70px;top:774px;font-size:11px;color:#000;letter-spacing:-0.142px;font-style:italic;">% of Revenues</div>
<div class="c i" style="left:567.5px;top:772.0px;width:64.5px;text-align:right;padding-right:3.3px;letter-spacing:-0.3px;">52.7%</div>
<div class="c i" style="left:632.0px;top:772.0px;width:64.5px;text-align:right;padding-right:3.3px;letter-spacing:-0.3px;">7.0%</div>
<div class="c i" style="left:696.5px;top:772.0px;width:64.5px;text-align:right;padding-right:3.3px;letter-spacing:-0.3px;">-10.2%</div>
<div class="c i" style="left:761.0px;top:772.0px;width:64.5px;text-align:right;padding-right:3.3px;letter-spacing:-0.3px;">278.2%</div>
<div class="c i" style="left:825.5px;top:772.0px;width:64.5px;text-align:right;padding-right:3.3px;letter-spacing:-0.3px;">34.9%</div>
<div class="c i" style="left:890.0px;top:772.0px;width:64.5px;text-align:right;padding-right:3.3px;letter-spacing:-0.3px;">32.0%</div>
<div class="c i" style="left:954.5px;top:772.0px;width:64.5px;text-align:right;padding-right:3.3px;letter-spacing:-0.3px;">29.6%</div>
<div class="c i" style="left:1019.0px;top:772.0px;width:64.5px;text-align:right;padding-right:3.3px;letter-spacing:-0.3px;">27.9%</div>
<div class="c i" style="left:1083.5px;top:772.0px;width:64.5px;text-align:right;padding-right:3.3px;letter-spacing:-0.3px;">26.9%</div>
<div class="c i" style="left:1148.0px;top:772.0px;width:64.5px;text-align:right;padding-right:3.3px;letter-spacing:-0.3px;">25.7%</div>
<div class="c i" style="left:1212.5px;top:772.0px;width:64.5px;text-align:right;padding-right:3.3px;letter-spacing:-0.3px;">32.0%</div>
<div class="c i" style="left:1277.0px;top:772.0px;width:64.5px;text-align:right;padding-right:3.3px;letter-spacing:-0.3px;">23.4%</div>
<div class="c i" style="left:1341.5px;top:772.0px;width:64.5px;text-align:right;padding-right:3.3px;letter-spacing:-0.3px;">22.6%</div>
<div class="t" style="left:73.20px;top:789px;font-size:11px;color:#000;letter-spacing:0.253px;font-style:italic;">Net Income Growth</div>
<div class="t" style="left:346.70px;top:789px;font-size:11px;color:#000;letter-spacing:-0.142px;font-style:italic;">% of Revenues</div>
<div class="c i" style="left:567.5px;top:787.0px;width:64.5px;text-align:right;padding-right:3.3px;letter-spacing:-0.3px;">47.3%</div>
<div class="c i" style="left:632.0px;top:787.0px;width:64.5px;text-align:right;padding-right:3.3px;letter-spacing:-0.3px;">28.6%</div>
<div class="c i" style="left:696.5px;top:787.0px;width:64.5px;text-align:right;padding-right:3.3px;letter-spacing:-0.3px;">-40.6%</div>
<div class="c i" style="left:761.0px;top:787.0px;width:64.5px;text-align:right;padding-right:3.3px;letter-spacing:-0.3px;">616.4%</div>
<div class="c i" style="left:825.5px;top:787.0px;width:64.5px;text-align:right;padding-right:3.3px;letter-spacing:-0.3px;">36.3%</div>
<div class="c i" style="left:890.0px;top:787.0px;width:64.5px;text-align:right;padding-right:3.3px;letter-spacing:-0.3px;">37.4%</div>
<div class="c i" style="left:954.5px;top:787.0px;width:64.5px;text-align:right;padding-right:3.3px;letter-spacing:-0.3px;">33.1%</div>
<div class="c i" style="left:1019.0px;top:787.0px;width:64.5px;text-align:right;padding-right:3.3px;letter-spacing:-0.3px;">31.1%</div>
<div class="c i" style="left:1083.5px;top:787.0px;width:64.5px;text-align:right;padding-right:3.3px;letter-spacing:-0.3px;">29.8%</div>
<div class="c i" style="left:1148.0px;top:787.0px;width:64.5px;text-align:right;padding-right:3.3px;letter-spacing:-0.3px;">27.6%</div>
<div class="c i" style="left:1212.5px;top:787.0px;width:64.5px;text-align:right;padding-right:3.3px;letter-spacing:-0.3px;">33.9%</div>
<div class="c i" style="left:1277.0px;top:787.0px;width:64.5px;text-align:right;padding-right:3.3px;letter-spacing:-0.3px;">24.2%</div>
<div class="c i" style="left:1341.5px;top:787.0px;width:64.5px;text-align:right;padding-right:3.3px;letter-spacing:-0.3px;">23.2%</div>
<div class="a " style="left:70px;top:726px;width:1337px;height:1px;background:repeating-linear-gradient(90deg,#555 0 1px,rgba(0,0,0,0) 1px 2px);"></div>
<div class="a " style="left:70px;top:801px;width:1337px;height:1px;background:repeating-linear-gradient(90deg,#555 0 1px,rgba(0,0,0,0) 1px 2px);"></div>
<div class="a " style="left:70px;top:726px;width:1px;height:76px;background:repeating-linear-gradient(180deg,#555 0 1px,rgba(0,0,0,0) 1px 2px);"></div>
<div class="a " style="left:1406px;top:726px;width:1px;height:76px;background:repeating-linear-gradient(180deg,#555 0 1px,rgba(0,0,0,0) 1px 2px);"></div>
<div class="a " style="left:503px;top:234px;width:1px;height:582px;background:#9c9c9c;"></div>
<div class="a " style="left:0px;top:400px;width:1445px;height:1.5px;background:#bdbdbd;"></div>
<div class="a " style="left:761px;top:325px;width:1px;height:491px;background:repeating-linear-gradient(180deg,#4a4a4a 0 2px,#c4c4c4 2px 3px);"></div>
<div class="a " style="left:0px;top:815.8px;width:1445px;height:24.4px;background:#e6e6e6;"></div>
<div class="a " style="left:0px;top:815.6px;width:1445px;height:1px;background:#c6c6c6;"></div>
<svg style="left:20.5px;top:824.5px;" width="5" height="8" viewBox="0 0 5 8"><path d="M4.6 0.3V7.3L0.4 3.8Z" fill="#c2c2c2"/></svg>
<svg style="left:45.2px;top:824.5px;" width="5" height="8" viewBox="0 0 5 8"><path d="M0.4 0.3V7.3L4.6 3.8Z" fill="#c2c2c2"/></svg>
<div class="a " style="left:84px;top:819.3px;width:1px;height:18px;background:#a6a6a6;"></div>
<div class="a " style="left:86.2px;top:818.7px;width:55px;height:19px;background:#1ca8e3;"></div>
<div class="t" style="left:94.50px;top:818px;font-size:14px;color:#1a1a1a;letter-spacing:-0.112px;">Cover</div>
<div class="a " style="left:143.2px;top:819.3px;width:1px;height:18px;background:#a6a6a6;"></div>
<div class="t" style="left:154.70px;top:818px;font-size:14.2px;color:#555;letter-spacing:0.120px;">Build-Up</div>
<div class="a " style="left:223.2px;top:816px;width:36.3px;height:22px;background:#fff;border-bottom:2px solid #217346;"></div>
<div class="t" style="left:234.20px;top:819px;font-size:13.5px;color:#217346;letter-spacing:-0.675px;transform:scaleX(0.8325);transform-origin:0 0;font-weight:bold;">FS</div>
<div class="t" style="left:269.90px;top:819px;font-size:13.8px;color:#555;letter-spacing:-0.690px;transform:scaleX(0.9451);transform-origin:0 0;">DCF</div>
<div class="a " style="left:307.3px;top:819.3px;width:1px;height:18px;background:#a6a6a6;"></div>
<div class="t" style="left:318.00px;top:819px;font-size:13.8px;color:#555;letter-spacing:-0.550px;">WACC</div>
<div class="a " style="left:369.4px;top:819.3px;width:1px;height:18px;background:#a6a6a6;"></div>
<svg style="left:396.5px;top:820.2px;" width="18" height="18" viewBox="0 0 18 18"><circle cx="8.8" cy="8.8" r="7.9" fill="none" stroke="#6a6a6a" stroke-width="1.1"/><path d="M4.5 8.8H13.1M8.8 4.5V13.1" stroke="#6a6a6a" stroke-width="1.2"/></svg>
<div class="a " style="left:961px;top:823.6px;width:2px;height:2px;background:#a6a6a6;"></div>
<div class="a " style="left:961px;top:827.6px;width:2px;height:2px;background:#a6a6a6;"></div>
<div class="a " style="left:961px;top:831.6px;width:2px;height:2px;background:#a6a6a6;"></div>
<div class="a " style="left:975px;top:820.5px;width:470px;height:16px;background:#fff;border:1px solid #ababab;border-right:none;"></div>
<div class="a " style="left:991.2px;top:820.5px;width:1px;height:16px;background:#ababab;"></div>
<svg style="left:980.5px;top:824.5px;" width="5" height="8" viewBox="0 0 5 8"><path d="M4.8 0V8L0.3 4Z" fill="#111"/></svg>
<div class="a " style="left:0px;top:840.2px;width:1445px;height:23px;background:#f3f2f1;"></div>
<div class="a " style="left:0px;top:840px;width:1445px;height:1px;background:#dcdcdc;"></div>
<div class="t" style="left:9.30px;top:847px;font-size:12px;color:#444;letter-spacing:-0.600px;transform:scaleX(0.9198);transform-origin:0 0;">Ready</div>
<div class="t" style="left:56.50px;top:847px;font-size:12px;color:#444;letter-spacing:-0.600px;transform:scaleX(0.9441);transform-origin:0 0;">Calculate</div>
<svg style="left:121px;top:844.6px;" width="16" height="16" viewBox="0 0 16 16"><circle cx="6.3" cy="2.7" r="1.9" fill="none" stroke="#444" stroke-width="1.2"/><path d="M1 5.3C0.2 6.6 1.2 7.4 2.4 7.3L4.5 7.2C4.7 10 3.8 12.2 2.2 14.4C3 15.2 3.8 15 4.3 14.2L6.3 10L7.2 11.4M11.6 5.3C12.4 6.6 11.4 7.4 10.2 7.3L8.1 7.2C8.1 8.2 8.2 8.8 8.5 9.6M1 5.3C2.8 4.6 4.6 5.6 6.3 5.6C8 5.6 9.8 4.6 11.6 5.3" fill="none" stroke="#444" stroke-width="1.15" stroke-linejoin="round"/><path d="M8.8 9.6L14.6 15M14.6 9.6L8.8 15" stroke="#444" stroke-width="1.2"/></svg>
<div class="t" style="left:139.50px;top:847px;font-size:12px;color:#3b3a39;letter-spacing:-0.600px;transform:scaleX(0.9884);transform-origin:0 0;font-weight:bold;">Accessibility: Investigate</div>
<svg style="left:1180.5px;top:845.5px;" width="15" height="13" viewBox="0 0 15 13"><path d="M7 9.5H0.6V0.6H12.4V4" fill="none" stroke="#444" stroke-width="1.1"/><path d="M2.5 11.5H6" stroke="#444" stroke-width="1"/><circle cx="10.5" cy="9" r="2.2" fill="none" stroke="#444" stroke-width="1.6" stroke-dasharray="1.2 0.9"/><circle cx="10.5" cy="9" r="1" fill="none" stroke="#444" stroke-width="0.9"/></svg>
<div class="t" style="left:1198.00px;top:847px;font-size:12px;color:#444;letter-spacing:-0.600px;transform:scaleX(0.9930);transform-origin:0 0;">Display Settings</div>
<div class="a " style="left:1295px;top:841px;width:42px;height:22px;background:#d0cecd;"></div>
<svg style="left:1308.5px;top:845px;" width="14" height="14" viewBox="0 0 14 14"><rect x="0.75" y="0.75" width="12.4" height="12.2" fill="#fff" stroke="#5a5856" stroke-width="1.5"/><path d="M0.75 4.9H13.1M0.75 8.9H13.1M4.9 0.75V12.9M9 0.75V12.9" fill="none" stroke="#5a5856" stroke-width="1.4"/></svg>
<svg style="left:1350.3px;top:845px;" width="15" height="14" viewBox="0 0 15 14"><rect x="0.75" y="0.75" width="13.3" height="12.2" fill="#fff" stroke="#5a5856" stroke-width="1.5"/><rect x="3.7" y="2.4" width="7.6" height="8.6" fill="none" stroke="#5a5856" stroke-width="1"/><path d="M5.2 4.6H9.8M5.2 6.6H9.8M5.2 8.6H9.8" stroke="#5a5856" stroke-width="0.9"/></svg>
<svg style="left:1392.3px;top:845px;" width="15" height="14" viewBox="0 0 15 14"><rect x="0.75" y="0.75" width="13.3" height="12.2" fill="#fff" stroke="#5a5856" stroke-width="1.5"/><path d="M4.5 0.75V7.5M8.2 0.75V7.5M0.75 7.5H8.9" fill="none" stroke="#5a5856" stroke-width="1.4"/></svg>
<div class="a " style="left:1426.5px;top:851px;width:8.3px;height:1.6px;background:#5a5856;"></div>
<div class="a " style="left:1439.7px;top:851.6px;width:6px;height:1.2px;background:#777;"></div>
<div class="a " style="left:0px;top:862.6px;width:1445px;height:1.4px;background:#2a3443;"></div>
<div class="a " style="left:257px;top:863px;width:46px;height:1px;background:#5a6068;"></div>
<div class="a " style="left:309px;top:863px;width:51px;height:1px;background:#b9784c;"></div>
</body></html>
